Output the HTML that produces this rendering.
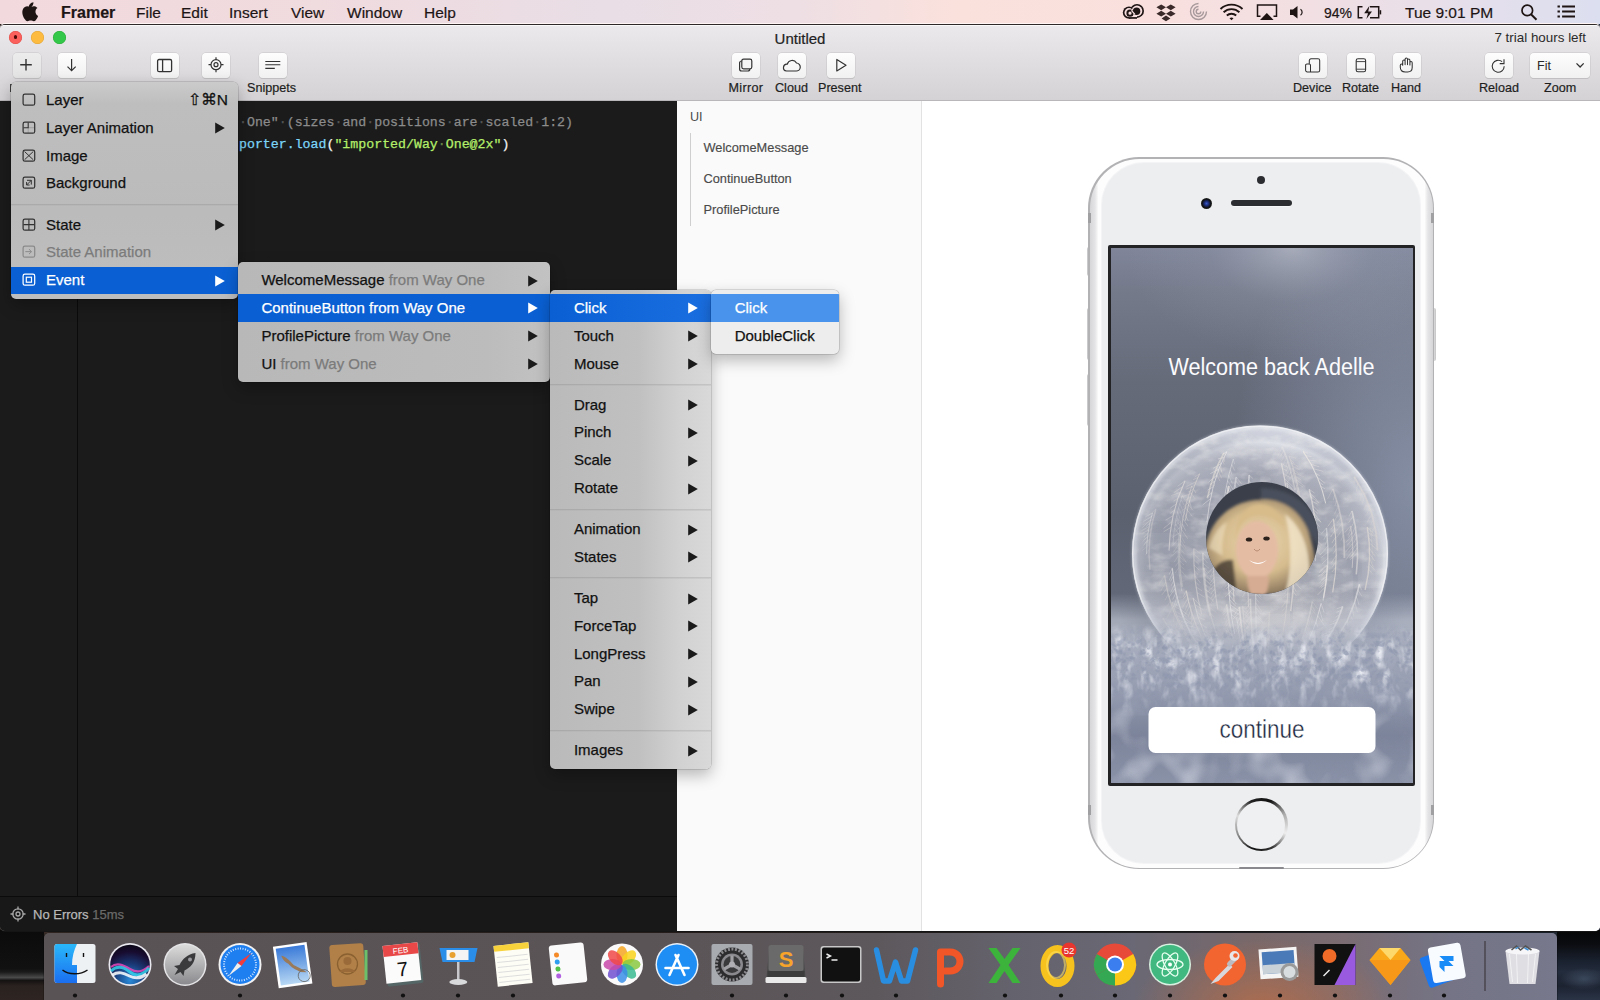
<!DOCTYPE html>
<html><head><meta charset="utf-8">
<style>
*{margin:0;padding:0;box-sizing:border-box}
html,body{width:1600px;height:1000px;overflow:hidden;background:#1e1c1f;font-family:"Liberation Sans",sans-serif}
.abs{position:absolute}
#desk{position:absolute;left:0;top:0;width:1600px;height:1000px;background:linear-gradient(90deg,#2a211e 0%,#3a2d28 3%,#2b2320 50%,#1e2630 97%,#243040 100%)}
#menubar{position:absolute;left:0;top:0;width:1600px;height:24px;background:linear-gradient(90deg,#f2d9dd 0%,#f0dbdf 20%,#e9dee6 38%,#eedfe4 50%,#fbe1dc 60%,#f9e0de 72%,#f1dfe3 82%,#e4dfec 93%,#dcdff0 100%);color:#1d1515;font-size:15.5px}
#menubar span{position:absolute;top:4.6px;-webkit-text-stroke:.2px currentColor;line-height:16px;white-space:nowrap}
#win{position:absolute;left:0;top:23.5px;width:1600px;height:907.5px;border-radius:5px 5px 5px 5px;overflow:hidden;background:#fff;border-top:1.5px solid #2e2829;box-shadow:0 -1px 0 #fff5f5,0 1px 0 #151515}
#toolbar{position:absolute;left:0;top:0;width:1600px;height:76px;background:linear-gradient(#ebe9eb,#d4d2d4);box-shadow:inset 0 1px 0 #fafafa;border-bottom:1px solid #b9b7b9}
.tl{position:absolute;top:6px;width:13px;height:13px;border-radius:50%}
.tb{position:absolute;top:28px;width:28px;height:25px;border-radius:4px;background:linear-gradient(#fdfdfd,#f1f1f1);box-shadow:0 0 0 0.5px #c6c4c6,0 1px 0.5px #bdbbbd}
.ic{position:absolute;left:0;top:0}
.lbl{position:absolute;top:56px;font-size:12.6px;color:#1e1e1e;-webkit-text-stroke:.2px currentColor;white-space:nowrap;line-height:14px}
.mono{position:absolute;font-family:"Liberation Mono",monospace;-webkit-text-stroke:.25px currentColor;font-size:13.25px;line-height:16px;white-space:pre}
.ws{color:#555}
.ws2{color:#6c8a4a}
.ly{position:absolute;left:26.5px;margin-top:-1.5px;-webkit-text-stroke:.15px currentColor;font-size:12.8px;line-height:14px;color:#4a4a4a;white-space:nowrap}
.menu{position:absolute;border-radius:5px;overflow:hidden;-webkit-text-stroke:.25px currentColor;box-shadow:0 0 0 .5px rgba(0,0,0,.22),0 6px 16px rgba(0,0,0,.28);font-size:15px;color:#111}
.row{position:absolute;left:0;right:0;height:27.8px}
.mt{position:absolute;top:-0.5px;line-height:27.8px;white-space:nowrap}
.gr{color:#7b7b7b}
.arr{position:absolute;top:8px}
.mi{position:absolute;left:10.5px;top:6.6px}
.sep{position:absolute;left:0;right:0;height:2px;background:rgba(0,0,0,.09);border-bottom:1px solid rgba(255,255,255,.15)}
#code{position:absolute;left:0;top:76px;width:677px;height:831px;background:#1b1b1b}
#layers{position:absolute;left:677px;top:76px;width:245px;height:831px;background:#fafafa;border-right:1px solid #e2e2e2}
#preview{position:absolute;left:922px;top:76px;width:678px;height:831px;background:#fff}
</style></head><body>
<div id="desk"></div>
<div class="abs" style="left:0;top:930px;width:43.5px;height:70px;background:linear-gradient(#0b0b0b 0,#111 55%,#1a1a1a 60%,#4a4a4a 68%,#151212 72%,#2a221f 80%,#2e2522 100%)"></div>
<div class="abs" style="left:1556.5px;top:930px;width:43.5px;height:70px;background:linear-gradient(#050505 0,#0b0c10 20%,#1a2230 45%,#232c3c 60%,#1c2230 80%,#2a3446 100%)"></div>
<div class="abs" style="left:1560px;top:968px;width:40px;height:22px;background:radial-gradient(ellipse at 60% 50%,rgba(90,110,135,.45),rgba(90,110,135,0) 70%)"></div>
<div id="menubar">
  <svg class="abs" style="left:0;top:0" width="1600" height="24">
    <path d="M35.2 6.4c-.8 0-1.9.6-2.5 1.3-.5.6-1 1.6-.8 2.5.9 0 1.9-.5 2.5-1.2.5-.7.9-1.6.8-2.6zM36.6 12.8c0-1.6 1.3-2.4 1.4-2.4-.8-1.1-2-1.3-2.4-1.3-1-.1-2 .6-2.5.6s-1.3-.6-2.2-.6c-1.1 0-2.2.7-2.8 1.7-1.2 2.1-.3 5.2.9 6.9.6.8 1.2 1.7 2.1 1.7.8 0 1.2-.5 2.2-.5s1.3.5 2.2.5c.9 0 1.5-.9 2-1.7.6-.9.9-1.8.9-1.9 0 0-1.8-.7-1.8-3z" fill="#1e1414" transform="translate(-17.6 -7.0) scale(1.45)"/>
    <g fill="#1e1414"><circle cx="1129" cy="12.6" r="6.2"/><circle cx="1137" cy="10.9" r="7"/><rect x="1129" y="12" width="8" height="6.8"/></g><g fill="#f6dedf"><circle cx="1129" cy="12.6" r="4.5"/><circle cx="1137" cy="10.9" r="5.3"/><rect x="1129" y="12" width="8" height="5.1"/></g><circle cx="1130" cy="13.2" r="2.6" fill="none" stroke="#1e1414" stroke-width="2"/><circle cx="1136.6" cy="11.2" r="3.7" fill="#1e1414"/><path d="M1131.4 10.4l3.5 4" stroke="#f6dedf" stroke-width="1.3"/>
    <path d="M1161.2 4.4l4.8 2.8-4.8 3-4.8-3zM1170.8 4.4l4.8 2.8-4.8 3-4.8-3zM1161.2 10.8l4.8 2.9-4.8 2.9-4.8-2.9zM1170.8 10.8l4.8 2.9-4.8 2.9-4.8-2.9zM1166 15.6l4.4 2.8-4.4 2.8-4.4-2.8z" fill="#3a2a2a"/>
    <g fill="none" stroke="#a89a9c" stroke-width="1.4"><path d="M1206.5 11.5a8 8 0 1 1-8-8"/><path d="M1203.5 11.5a5 5 0 1 1-5-5"/><path d="M1200.8 11.5a2.3 2.3 0 1 1-2.3-2.3"/></g>
    <g fill="none" stroke="#1e1414" stroke-width="1.9"><path d="M1220.5 9a16 16 0 0 1 22 0"/><path d="M1223.6 12.3a11.5 11.5 0 0 1 15.8 0"/><path d="M1226.8 15.5a7 7 0 0 1 9.4 0"/></g>
    <path d="M1229.5 18.3l2 1.9 2-1.9a3 3 0 0 0-4 0z" fill="#1e1414"/>
    <path d="M1260.5 16.3h-3v-11.2h19v11.2h-3" fill="none" stroke="#1e1414" stroke-width="1.5"/><path d="M1260 20l6.8-7 6.8 7z" fill="#1e1414"/>
    <path d="M1290 9.5h3l4.5-3.5v12.4l-4.5-3.5h-3z" fill="#1e1414"/><path d="M1300.5 9.2a3.6 3.6 0 0 1 0 6" stroke="#1e1414" stroke-width="1.2" fill="none"/>
    <path d="M1362.5 6.8h-4.2v11h4.2M1370 6.8h8.7v11h-8.7" fill="none" stroke="#1e1414" stroke-width="1.5"/><path d="M1379.6 10.2h1.6v4.2h-1.6z" fill="#1e1414"/><path d="M1369.5 5.8l-5.3 7.5h3.8l-1.6 5.6 5.6-7.5h-3.8z" fill="#1e1414"/>
    <circle cx="1527.3" cy="10.4" r="5.3" fill="none" stroke="#1e1414" stroke-width="1.7"/><path d="M1531 14.2l5.5 5.5" stroke="#1e1414" stroke-width="2"/>
    <path d="M1557.5 6.5h17.5M1557.5 11.5h17.5M1557.5 16.5h17.5" stroke="#1e1414" stroke-width="2" stroke-dasharray="2.4 2.2 100"/>
  </svg>

  <span style="left:61px;font-weight:bold;font-size:16px">Framer</span>
  <span style="left:136px">File</span>
  <span style="left:181px">Edit</span>
  <span style="left:229px">Insert</span>
  <span style="left:291px">View</span>
  <span style="left:347px">Window</span>
  <span style="left:424px">Help</span>
  <span style="left:1324px;font-size:14px;top:5px">94%</span>
  <span style="left:1405px">Tue 9:01 PM</span>
</div>
<div id="win">
  <div id="toolbar">
    <div class="tl" style="left:9px;background:#fc605c;box-shadow:inset 0 0 0 .5px #de4a45"><div class="abs" style="left:4.6px;top:4.6px;width:3.8px;height:3.8px;border-radius:50%;background:#4a0a08"></div></div>
    <div class="tl" style="left:31px;background:#fdbc40;box-shadow:inset 0 0 0 .5px #dea236"></div>
    <div class="tl" style="left:53px;background:#34c84a;box-shadow:inset 0 0 0 .5px #27aa35"></div>
    <div class="abs" style="left:0;top:6px;width:1600px;text-align:center;font-size:15px;color:#222;line-height:16px;-webkit-text-stroke:.2px #222">Untitled</div>

    <div class="tb" style="left:13px;background:linear-gradient(#ececec,#e3e3e3)"><svg class="ic" width="28" height="25"><path d="M13 6v11.5M7.2 11.8h11.6" stroke="#333" stroke-width="1.4" fill="none"/></svg></div>
    <div class="tb" style="left:58px"><svg class="ic" width="28" height="25"><path d="M13.6 6v11.5M9.5 13.6l4.1 4.1l4.1-4.1" stroke="#333" stroke-width="1.2" fill="none"/></svg></div>
    <div class="tb" style="left:151px"><svg class="ic" width="28" height="25"><rect x="6.6" y="6.5" width="14" height="12.2" rx="1.5" stroke="#333" stroke-width="1.3" fill="none"/><path d="M11.6 6.5v12.2" stroke="#333" stroke-width="1.3"/></svg></div>
    <div class="tb" style="left:202px"><svg class="ic" width="28" height="25"><circle cx="14" cy="11.7" r="5" stroke="#333" stroke-width="1.2" fill="none"/><circle cx="14" cy="11.7" r="2" stroke="#333" stroke-width="1.2" fill="none"/><path d="M14 4.2v2.5M14 16.7v2.5M6.5 11.7h2.5M19 11.7h2.5" stroke="#333" stroke-width="1.2"/></svg></div>
    <div class="tb" style="left:259px"><svg class="ic" width="28" height="25"><path d="M6.3 8.5h15M6.3 11.7h15M6.3 15.4h9.5" stroke="#333" stroke-width="1.1"/></svg></div>
    <div class="lbl" style="left:247px">Snippets</div>
    <div class="abs" style="left:10px;top:59px;width:1.5px;height:8px;background:#444"></div>
    <div class="tb" style="left:732px"><svg class="ic" width="28" height="25"><rect x="7.6" y="8" width="10.2" height="10" rx="2" stroke="#333" stroke-width="1.2" fill="none"/><rect x="9.8" y="6.1" width="10" height="9.8" rx="1.8" stroke="#333" stroke-width="1.2" fill="#f4f4f4"/></svg></div>
    <div class="lbl" style="left:728.5px;letter-spacing:.3px">Mirror</div>
    <div class="tb" style="left:778px"><svg class="ic" width="28" height="25"><path d="M8.5 18h9.5a4 4 0 0 0 0.5-8a5 5 0 0 0-9.2 1.2a3.4 3.4 0 0 0-0.8 6.8z" stroke="#333" stroke-width="1.2" fill="none"/></svg></div>
    <div class="lbl" style="left:775px">Cloud</div>
    <div class="tb" style="left:827px"><svg class="ic" width="28" height="25"><path d="M9.8 6.5v11.4l9.2-5.7z" stroke="#333" stroke-width="1.2" fill="none" stroke-linejoin="round"/></svg></div>
    <div class="lbl" style="left:818px">Present</div>
    <div class="tb" style="left:1299px"><svg class="ic" width="28" height="25"><path d="M10.3 10.6V7.5a1.7 1.7 0 0 1 1.7-1.7h7a1.7 1.7 0 0 1 1.7 1.7v9.7a1.7 1.7 0 0 1-1.7 1.7H8.3a1.7 1.7 0 0 1-1.7-1.7v-5a1.3 1.3 0 0 1 1.3-1.3h2.3a1.3 1.3 0 0 1 1.3 1.3v6.7" stroke="#333" stroke-width="1.05" fill="none"/></svg></div>
    <div class="lbl" style="left:1293px">Device</div>
    <div class="tb" style="left:1347px"><svg class="ic" width="28" height="25"><rect x="9.2" y="5.8" width="9.4" height="13" rx="1.8" stroke="#333" stroke-width="1.1" fill="none"/><path d="M9.3 8.6h9.2M9.3 16.2h9.2" stroke="#333" stroke-width=".9"/></svg></div>
    <div class="lbl" style="left:1342px">Rotate</div>
    <div class="tb" style="left:1393px"><svg class="ic" width="28" height="25"><path d="M7.3 12.2Q7.3 10.9 8.5 10.9Q9.7 10.9 9.7 12.2V8.2Q9.7 6.9 10.9 6.9Q12.1 6.9 12.1 8.2V11.6V6.2Q12.1 4.9 13.3 4.9Q14.5 4.9 14.5 6.2V11.6V7.2Q14.5 5.9 15.7 5.9Q16.9 5.9 16.9 7.2V12V9.7Q16.9 8.5 18 8.5Q19.2 8.5 19.2 9.7V14.5Q19.2 18.9 14.6 18.9H12.2Q7.3 18.9 7.3 14.3Z" stroke="#333" stroke-width="1.05" fill="none" stroke-linejoin="round"/></svg></div>
    <div class="lbl" style="left:1391px">Hand</div>
    <div class="tb" style="left:1485px"><svg class="ic" width="28" height="25"><path d="M17.1 8.7A6 6 0 1 0 19.2 13.3" stroke="#333" stroke-width="1.1" fill="none"/><path d="M19 6.2v4.4h-4.3" stroke="#333" stroke-width="1.1" fill="none"/></svg></div>
    <div class="lbl" style="left:1479px">Reload</div>
    <div class="tb" style="left:1530px;width:60px"><div class="abs" style="left:7px;top:5.8px;font-size:12.5px;color:#2a2a2a;line-height:16px">Fit</div><svg class="ic" width="60" height="25"><path d="M46.5 10.4l3.6 3.6l3.6-3.6" stroke="#333" stroke-width="1.3" fill="none"/></svg></div>
    <div class="lbl" style="left:1544px">Zoom</div>
    <div class="abs" style="right:14px;top:5px;font-size:13.4px;color:#2b2b2b;line-height:16px">7 trial hours left</div>
  </div>
  <div id="code">
    <div class="abs" style="left:77px;top:0;width:1px;height:795px;background:#0b0b0b"></div>
    <div class="mono" style="left:239px;top:14px;color:#8c8c8c"><span class="ws">&#183;</span>One"<span class="ws">&#183;</span>(sizes<span class="ws">&#183;</span>and<span class="ws">&#183;</span>positions<span class="ws">&#183;</span>are<span class="ws">&#183;</span>scaled<span class="ws">&#183;</span>1:2)</div>
    <div class="mono" style="left:239px;top:36px;color:#f2f2f2"><span style="color:#7dd6fa">porter.load</span>(<span style="color:#b4ef6a">"imported/Way<span class="ws2">&#183;</span>One@2x"</span>)</div>
    <div class="abs" style="left:0;top:795px;width:677px;height:1px;background:#0b0b0b"></div>
    <div class="abs" style="left:0;top:796px;width:677px;height:35px;background:#181818"></div>
    <svg class="abs" style="left:9px;top:804px" width="18" height="18"><circle cx="9" cy="9" r="5.2" stroke="#a8a8a8" stroke-width="1.3" fill="none"/><circle cx="9" cy="9" r="2" stroke="#a8a8a8" stroke-width="1.3" fill="none"/><path d="M9 1.5v3M9 13.5v3M1.5 9h3M13.5 9h3" stroke="#a8a8a8" stroke-width="1.3"/></svg>
    <div class="abs" style="left:33px;top:806px;font-size:13px;line-height:15px;color:#b8b8b8;white-space:nowrap;-webkit-text-stroke:.25px currentColor">No Errors <span style="color:#6a6a6a">15ms</span></div>
  </div>
  <div id="layers">
    <div class="abs" style="left:13px;top:9.5px;font-size:12.6px;line-height:14px;color:#4a4a4a">UI</div>
    <div class="abs" style="left:13px;top:32px;width:1px;height:93px;background:#cfcfcf"></div>
    <div class="ly" style="top:42px">WelcomeMessage</div>
    <div class="ly" style="top:73px">ContinueButton</div>
    <div class="ly" style="top:104px">ProfilePicture</div>
  </div>
  <div id="preview"></div>
</div>

<div id="phone" class="abs" style="left:1086px;top:157px;width:350px;height:712px">
  <div class="abs" style="left:0.5px;top:90px;width:4px;height:29px;border-radius:2px 0 0 2px;background:linear-gradient(90deg,#c4c4c6,#f2f2f2)"></div>
  <div class="abs" style="left:0.5px;top:151px;width:4px;height:52px;border-radius:2px 0 0 2px;background:linear-gradient(90deg,#c4c4c6,#f2f2f2)"></div>
  <div class="abs" style="left:0.5px;top:217px;width:4px;height:52px;border-radius:2px 0 0 2px;background:linear-gradient(90deg,#c4c4c6,#f2f2f2)"></div>
  <div class="abs" style="left:345.5px;top:151px;width:4px;height:53px;border-radius:0 2px 2px 0;background:linear-gradient(90deg,#f2f2f2,#c4c4c6)"></div>
  <div class="abs" style="left:2px;top:0;width:346px;height:712px;border-radius:51px;background:#b2b2b5"></div>
  <div class="abs" style="left:3.5px;top:1.5px;width:343px;height:709px;border-radius:49.5px;background:linear-gradient(90deg,#d6d6d9 0,#e4e4e6 5px,#fdfdfd 8.5px,#fdfdfd calc(100% - 8.5px),#e4e4e6 calc(100% - 5px),#d6d6d9 100%)"></div>
  <div class="abs" style="left:2px;top:56px;width:3px;height:10px;background:#a0a0a3"></div>
  <div class="abs" style="left:345px;top:56px;width:3px;height:10px;background:#a0a0a3"></div>
  <div class="abs" style="left:2px;top:648px;width:3px;height:10px;background:#a0a0a3"></div>
  <div class="abs" style="left:345px;top:648px;width:3px;height:10px;background:#a0a0a3"></div>
  <div class="abs" style="left:16px;top:6px;width:318px;height:700px;border-radius:42px;background:#eceef0;box-shadow:0 0 0 1px #f4f4f6"></div>
  <div class="abs" style="left:171px;top:19px;width:8px;height:8px;border-radius:50%;background:#2a2c30"></div>
  <div class="abs" style="left:114.5px;top:40.5px;width:11px;height:11px;border-radius:50%;background:radial-gradient(circle at 50% 50%,#3a58c8 0,#1a2a70 30%,#111 55%,#444 100%)"></div>
  <div class="abs" style="left:145px;top:43px;width:61px;height:6px;border-radius:3px;background:#2c2d30;box-shadow:0 0.5px 0 #fff"></div>
  <div class="abs" style="left:148.5px;top:641px;width:53px;height:53px;border-radius:50%;background:conic-gradient(from 200deg,#111,#888,#ddd,#222,#111,#aaa,#eee,#333,#111)"></div>
  <div class="abs" style="left:151px;top:643.5px;width:48px;height:48px;border-radius:50%;background:#eff0f2"></div>
  <div class="abs" style="left:152.5px;top:709.5px;width:45px;height:2.5px;border-radius:1px;background:#8a8a8e"></div>
  <div id="screen" class="abs" style="left:21.5px;top:88px;width:307px;height:541px;background:#232326;border-radius:2px;overflow:hidden">
    <svg class="abs" style="left:3px;top:3px" width="302" height="535">
      <defs>
        <linearGradient id="bgv" x1="0" y1="0" x2="0" y2="1">
          <stop offset="0" stop-color="#80859a"/><stop offset=".08" stop-color="#747a8a"/><stop offset=".25" stop-color="#666b7a"/><stop offset=".5" stop-color="#5b616f"/><stop offset=".7" stop-color="#646a7a"/><stop offset="1" stop-color="#8a92a8"/>
        </linearGradient>
        <radialGradient id="bgr" cx="1" cy=".45" r=".6">
          <stop offset="0" stop-color="#95a0b8" stop-opacity=".7"/><stop offset="1" stop-color="#95a0b8" stop-opacity="0"/>
        </radialGradient>
        <radialGradient id="bub" cx=".5" cy=".55" r=".5">
          <stop offset="0" stop-color="#b4b4bc"/><stop offset=".5" stop-color="#acaeb8"/><stop offset=".75" stop-color="#b2b4c0"/><stop offset=".9" stop-color="#c6c8d2"/><stop offset=".97" stop-color="#dfe1e8"/><stop offset="1" stop-color="#cfd2dc"/>
        </radialGradient>
        <linearGradient id="bubShade" x1="0" y1="0" x2="1" y2="0">
          <stop offset="0" stop-color="#5a6070" stop-opacity=".25"/><stop offset=".5" stop-color="#fff" stop-opacity="0"/><stop offset="1" stop-color="#5a6070" stop-opacity=".1"/>
        </linearGradient>
        <linearGradient id="snow" x1="0" y1="0" x2="0" y2="1">
          <stop offset="0" stop-color="#b0b6c4" stop-opacity="0"/><stop offset=".14" stop-color="#b8bdca" stop-opacity=".75"/><stop offset=".3" stop-color="#b0b6c4" stop-opacity=".95"/><stop offset=".5" stop-color="#8f97ac"/><stop offset=".75" stop-color="#7c849b"/><stop offset="1" stop-color="#8a92a8"/>
        </linearGradient>
        <filter id="noise" x="0" y="0" width="100%" height="100%">
          <feTurbulence type="fractalNoise" baseFrequency=".09 .05" numOctaves="3" seed="4"/>
          <feColorMatrix type="matrix" values="0 0 0 0 .95  0 0 0 0 .96  0 0 0 0 1  2.6 0 0 0 -1.2"/>
        </filter>
        <filter id="noise2" x="0" y="0" width="100%" height="100%">
          <feTurbulence type="fractalNoise" baseFrequency=".035" numOctaves="3" seed="9"/>
          <feColorMatrix type="matrix" values="0 0 0 0 .25  0 0 0 0 .28  0 0 0 0 .38  1.8 0 0 0 -.9"/>
        </filter>
        <filter id="feath" x="0" y="0" width="100%" height="100%">
          <feTurbulence type="fractalNoise" baseFrequency=".05 .09" numOctaves="3" seed="2"/>
          <feColorMatrix type="matrix" values="0 0 0 0 .98  0 0 0 0 .96  0 0 0 0 .93  2.6 0 0 0 -1.15"/>
        </filter>
        <clipPath id="bclip"><circle cx="149" cy="305.5" r="128"/></clipPath>
        <clipPath id="ppclip"><circle cx="151" cy="290" r="56"/></clipPath>
        <radialGradient id="hair" cx=".5" cy=".45" r=".55">
          <stop offset="0" stop-color="#ead6b0"/><stop offset=".6" stop-color="#d6bc8e"/><stop offset="1" stop-color="#8e7a60"/>
        </radialGradient>
      <linearGradient id="mg1" x1="0" y1="0" x2="0" y2="1"><stop offset="0" stop-color="#fff" stop-opacity="0"/><stop offset=".25" stop-color="#fff" stop-opacity=".9"/><stop offset=".55" stop-color="#fff" stop-opacity=".8"/><stop offset="1" stop-color="#fff" stop-opacity="0"/></linearGradient>
        <mask id="m1"><rect y="375" width="302" height="95" fill="url(#mg1)"/></mask>
        <linearGradient id="mg2" x1="0" y1="0" x2="0" y2="1"><stop offset="0" stop-color="#fff" stop-opacity="0"/><stop offset=".2" stop-color="#fff" stop-opacity=".8"/><stop offset=".5" stop-color="#fff" stop-opacity=".6"/><stop offset="1" stop-color="#fff" stop-opacity=".3"/></linearGradient>
        <mask id="m2"><rect y="380" width="302" height="155" fill="url(#mg2)"/></mask>
      <filter id="noise3" x="0" y="0" width="100%" height="100%">
          <feTurbulence type="turbulence" baseFrequency=".12" numOctaves="2" seed="11"/>
          <feColorMatrix type="matrix" values="0 0 0 0 .26  0 0 0 0 .3  0 0 0 0 .42  3 0 0 0 -.7"/>
        </filter>
        <filter id="blob" x="0" y="0" width="100%" height="100%">
          <feTurbulence type="fractalNoise" baseFrequency=".03" numOctaves="2" seed="21"/>
          <feColorMatrix type="matrix" values="0 0 0 0 .8  0 0 0 0 .82  0 0 0 0 .88  2.4 0 0 0 -1.1"/>
        </filter>
        <linearGradient id="mg3" x1="0" y1="0" x2="0" y2="1"><stop offset="0" stop-color="#fff" stop-opacity="0"/><stop offset=".3" stop-color="#fff" stop-opacity=".8"/><stop offset="1" stop-color="#fff" stop-opacity=".8"/></linearGradient>
        <mask id="m3"><rect y="450" width="302" height="85" fill="url(#mg3)"/></mask>
      <radialGradient id="bgt" cx=".6" cy="0" r=".55"><stop offset="0" stop-color="#b8bcc8" stop-opacity=".7"/><stop offset=".5" stop-color="#9aa0b0" stop-opacity=".2"/><stop offset="1" stop-color="#9aa0b0" stop-opacity="0"/></radialGradient>
      <radialGradient id="msg" cx=".5" cy=".05" r=".6" gradientTransform="scale(1 1)"><stop offset="0" stop-color="#fff" stop-opacity=".25"/><stop offset=".45" stop-color="#fff" stop-opacity=".5"/><stop offset=".8" stop-color="#fff" stop-opacity="1"/><stop offset="1" stop-color="#fff" stop-opacity="1"/></radialGradient>
        <mask id="msnow"><rect y="345" width="302" height="190" fill="url(#msg)"/></mask>
      <linearGradient id="crys" x1="0" y1="0" x2="0" y2="1"><stop offset="0" stop-color="#a4aabb" stop-opacity="0"/><stop offset=".3" stop-color="#a4aabb" stop-opacity=".9"/><stop offset=".7" stop-color="#959cb0" stop-opacity=".95"/><stop offset="1" stop-color="#8a92a8" stop-opacity="0"/></linearGradient>
      <filter id="soft2" x="-50%" y="-50%" width="200%" height="200%"><feGaussianBlur stdDeviation="14"/></filter>
      <filter id="soft3" x="-50%" y="-50%" width="200%" height="200%"><feGaussianBlur stdDeviation="4"/></filter>
      <filter id="pps" x="-10%" y="-10%" width="120%" height="120%"><feGaussianBlur stdDeviation="1.6"/></filter>
      <filter id="soft"><feGaussianBlur stdDeviation="1.5"/></filter>
      </defs>
      <rect width="302" height="535" fill="url(#bgv)"/>
      <rect width="302" height="535" fill="url(#bgr)"/>
      <rect width="302" height="200" fill="url(#bgt)"/>
      <circle cx="149" cy="305.5" r="128" fill="url(#bub)"/>
      <g clip-path="url(#bclip)">
        <ellipse cx="95" cy="300" rx="75" ry="110" fill="#7c8294" opacity=".35" filter="url(#soft2)"/>
        <ellipse cx="215" cy="290" rx="50" ry="90" fill="#848a9c" opacity=".25" filter="url(#soft2)"/>
        <ellipse cx="150" cy="400" rx="120" ry="50" fill="#eae6e4" opacity=".55" filter="url(#soft2)"/>
        <rect x="21" y="177" width="256" height="256" filter="url(#feath)" opacity=".4"/>
        <g><path d="M67.6 318.6L103.6 335.9" stroke="#6c7284" stroke-width="7.4" opacity="0.11" stroke-linecap="round" filter="url(#soft3)"/><path d="M134.4 401.4L121.6 440.0" stroke="#6c7284" stroke-width="12.2" opacity="0.14" stroke-linecap="round" filter="url(#soft3)"/><path d="M186.8 354.4L163.0 361.6" stroke="#6c7284" stroke-width="7.7" opacity="0.16" stroke-linecap="round" filter="url(#soft3)"/><path d="M225.1 344.0L234.0 372.8" stroke="#6c7284" stroke-width="14.8" opacity="0.07" stroke-linecap="round" filter="url(#soft3)"/><path d="M248.2 345.4L282.1 355.3" stroke="#6c7284" stroke-width="16.0" opacity="0.17" stroke-linecap="round" filter="url(#soft3)"/><path d="M194.8 344.6L208.1 364.6" stroke="#6c7284" stroke-width="12.8" opacity="0.09" stroke-linecap="round" filter="url(#soft3)"/><path d="M140.8 282.0L119.8 295.8" stroke="#6c7284" stroke-width="10.8" opacity="0.12" stroke-linecap="round" filter="url(#soft3)"/><path d="M95.2 268.5L126.6 271.5" stroke="#6c7284" stroke-width="13.7" opacity="0.17" stroke-linecap="round" filter="url(#soft3)"/><path d="M231.1 293.2L243.9 321.1" stroke="#6c7284" stroke-width="13.5" opacity="0.14" stroke-linecap="round" filter="url(#soft3)"/><path d="M181.0 333.3L179.8 364.1" stroke="#6c7284" stroke-width="14.6" opacity="0.13" stroke-linecap="round" filter="url(#soft3)"/><path d="M245.6 322.8L243.7 355.6" stroke="#6c7284" stroke-width="9.2" opacity="0.12" stroke-linecap="round" filter="url(#soft3)"/><path d="M77.7 365.8L74.1 388.6" stroke="#6c7284" stroke-width="8.8" opacity="0.15" stroke-linecap="round" filter="url(#soft3)"/><path d="M194.0 316.1L181.4 343.7" stroke="#6c7284" stroke-width="7.7" opacity="0.12" stroke-linecap="round" filter="url(#soft3)"/><path d="M161.0 350.7L127.0 355.2" stroke="#6c7284" stroke-width="11.5" opacity="0.17" stroke-linecap="round" filter="url(#soft3)"/><path d="M202.4 399.2L228.0 416.5" stroke="#6c7284" stroke-width="13.9" opacity="0.17" stroke-linecap="round" filter="url(#soft3)"/><path d="M194.4 307.4L215.0 345.3" stroke="#6c7284" stroke-width="9.4" opacity="0.07" stroke-linecap="round" filter="url(#soft3)"/><path d="M225.3 325.1L175.8 325.3" stroke="#6c7284" stroke-width="11.7" opacity="0.07" stroke-linecap="round" filter="url(#soft3)"/><path d="M107.3 390.6L88.2 431.4" stroke="#6c7284" stroke-width="9.2" opacity="0.13" stroke-linecap="round" filter="url(#soft3)"/><path d="M70.2 316.8L42.7 321.4" stroke="#6c7284" stroke-width="15.3" opacity="0.09" stroke-linecap="round" filter="url(#soft3)"/><path d="M122.6 405.0L94.7 410.0" stroke="#6c7284" stroke-width="11.9" opacity="0.15" stroke-linecap="round" filter="url(#soft3)"/><path d="M137.7 266.8L157.5 287.3" stroke="#6c7284" stroke-width="13.3" opacity="0.14" stroke-linecap="round" filter="url(#soft3)"/><path d="M219.5 382.2L243.2 404.7" stroke="#6c7284" stroke-width="11.2" opacity="0.18" stroke-linecap="round" filter="url(#soft3)"/><path d="M75.2 276.3L28.0 282.0" stroke="#6c7284" stroke-width="14.0" opacity="0.12" stroke-linecap="round" filter="url(#soft3)"/><path d="M59.3 249.8L48.4 292.1" stroke="#6c7284" stroke-width="10.3" opacity="0.11" stroke-linecap="round" filter="url(#soft3)"/><path d="M142.5 232.3L129.9 248.5" stroke="#6c7284" stroke-width="15.3" opacity="0.16" stroke-linecap="round" filter="url(#soft3)"/><path d="M234.2 241.5L205.7 263.7" stroke="#6c7284" stroke-width="10.6" opacity="0.08" stroke-linecap="round" filter="url(#soft3)"/><path d="M119.0 345.1L92.1 384.9" stroke="#6c7284" stroke-width="12.1" opacity="0.14" stroke-linecap="round" filter="url(#soft3)"/><path d="M199.1 355.4L212.5 394.2" stroke="#6c7284" stroke-width="9.4" opacity="0.11" stroke-linecap="round" filter="url(#soft3)"/><path d="M111.0 381.7L134.3 388.5" stroke="#6c7284" stroke-width="10.1" opacity="0.15" stroke-linecap="round" filter="url(#soft3)"/><path d="M154.0 223.0L173.7 266.8" stroke="#6c7284" stroke-width="7.4" opacity="0.13" stroke-linecap="round" filter="url(#soft3)"/><path d="M138.2 227.0L137.1 242.5L136.3 258.0L135.7 273.5L135.4 288.9" stroke="#f8f6f4" stroke-width="1.7" opacity="0.48" fill="none"/><path d="M138.2 227.0l3.6 3.5" stroke="#f8f6f4" stroke-width=".8" opacity="0.34"/><path d="M137.8 232.2l3.8 5.8" stroke="#f8f6f4" stroke-width=".8" opacity="0.34"/><path d="M137.4 237.4l3.9 7.0" stroke="#f8f6f4" stroke-width=".8" opacity="0.34"/><path d="M137.1 242.5l5.8 9.8" stroke="#f8f6f4" stroke-width=".8" opacity="0.34"/><path d="M136.8 247.7l6.0 7.9" stroke="#f8f6f4" stroke-width=".8" opacity="0.34"/><path d="M136.5 252.8l4.1 7.2" stroke="#f8f6f4" stroke-width=".8" opacity="0.34"/><path d="M136.3 258.0l7.1 8.3" stroke="#f8f6f4" stroke-width=".8" opacity="0.34"/><path d="M136.1 263.1l4.4 6.9" stroke="#f8f6f4" stroke-width=".8" opacity="0.34"/><path d="M135.9 268.3l7.8 7.5" stroke="#f8f6f4" stroke-width=".8" opacity="0.34"/><path d="M82.8 300.5L83.0 317.0L84.3 333.5L86.9 350.1L90.8 366.6" stroke="#e6e0dc" stroke-width="1.2" opacity="0.51" fill="none"/><path d="M82.8 300.5l7.0 5.5" stroke="#e6e0dc" stroke-width=".8" opacity="0.36"/><path d="M82.9 306.0l5.3 5.3" stroke="#e6e0dc" stroke-width=".8" opacity="0.36"/><path d="M82.9 311.5l5.2 5.0" stroke="#e6e0dc" stroke-width=".8" opacity="0.36"/><path d="M83.0 317.0l5.3 5.3" stroke="#e6e0dc" stroke-width=".8" opacity="0.36"/><path d="M83.4 322.5l3.9 4.5" stroke="#e6e0dc" stroke-width=".8" opacity="0.36"/><path d="M83.9 328.0l5.5 6.9" stroke="#e6e0dc" stroke-width=".8" opacity="0.36"/><path d="M84.3 333.5l3.6 3.9" stroke="#e6e0dc" stroke-width=".8" opacity="0.36"/><path d="M85.2 339.0l5.8 3.9" stroke="#e6e0dc" stroke-width=".8" opacity="0.36"/><path d="M86.0 344.6l7.9 4.8" stroke="#e6e0dc" stroke-width=".8" opacity="0.36"/><path d="M125.6 369.1L128.2 387.2L132.1 405.2L138.4 423.3L143.6 430.9" stroke="#f8f6f4" stroke-width="1.1" opacity="0.36" fill="none"/><path d="M125.6 369.1l7.7 5.1" stroke="#f8f6f4" stroke-width=".8" opacity="0.25"/><path d="M126.5 375.1l6.5 4.5" stroke="#f8f6f4" stroke-width=".8" opacity="0.25"/><path d="M127.3 381.1l5.3 4.3" stroke="#f8f6f4" stroke-width=".8" opacity="0.25"/><path d="M128.2 387.2l5.9 4.9" stroke="#f8f6f4" stroke-width=".8" opacity="0.25"/><path d="M129.5 393.2l5.9 5.1" stroke="#f8f6f4" stroke-width=".8" opacity="0.25"/><path d="M130.8 399.2l5.3 3.2" stroke="#f8f6f4" stroke-width=".8" opacity="0.25"/><path d="M132.1 405.2l5.4 4.1" stroke="#f8f6f4" stroke-width=".8" opacity="0.25"/><path d="M134.2 411.2l8.2 2.9" stroke="#f8f6f4" stroke-width=".8" opacity="0.25"/><path d="M136.3 417.2l8.2 7.1" stroke="#f8f6f4" stroke-width=".8" opacity="0.25"/><path d="M231.7 358.5L227.3 370.5L221.6 382.5L214.3 394.5L204.8 406.5" stroke="#f8f6f4" stroke-width="1.7" opacity="0.61" fill="none"/><path d="M231.7 358.5l-6.0 2.4" stroke="#f8f6f4" stroke-width=".8" opacity="0.43"/><path d="M230.2 362.5l-4.8 1.8" stroke="#f8f6f4" stroke-width=".8" opacity="0.43"/><path d="M228.7 366.5l-4.2 2.8" stroke="#f8f6f4" stroke-width=".8" opacity="0.43"/><path d="M227.3 370.5l-5.2 3.3" stroke="#f8f6f4" stroke-width=".8" opacity="0.43"/><path d="M225.4 374.5l-6.7 2.4" stroke="#f8f6f4" stroke-width=".8" opacity="0.43"/><path d="M223.5 378.5l-5.4 3.3" stroke="#f8f6f4" stroke-width=".8" opacity="0.43"/><path d="M221.6 382.5l-10.2 4.3" stroke="#f8f6f4" stroke-width=".8" opacity="0.43"/><path d="M219.1 386.5l-5.5 1.6" stroke="#f8f6f4" stroke-width=".8" opacity="0.43"/><path d="M216.7 390.5l-8.5 2.2" stroke="#f8f6f4" stroke-width=".8" opacity="0.43"/><path d="M136.5 298.3L136.5 313.6L136.7 328.9L137.1 344.2L137.6 359.5" stroke="#e6e0dc" stroke-width="1.4" opacity="0.50" fill="none"/><path d="M136.5 298.3l-6.5 8.7" stroke="#e6e0dc" stroke-width=".8" opacity="0.35"/><path d="M136.5 303.4l-8.4 7.5" stroke="#e6e0dc" stroke-width=".8" opacity="0.35"/><path d="M136.5 308.5l-5.3 9.5" stroke="#e6e0dc" stroke-width=".8" opacity="0.35"/><path d="M136.5 313.6l-2.9 5.4" stroke="#e6e0dc" stroke-width=".8" opacity="0.35"/><path d="M136.6 318.7l-5.4 5.3" stroke="#e6e0dc" stroke-width=".8" opacity="0.35"/><path d="M136.6 323.8l-5.5 9.4" stroke="#e6e0dc" stroke-width=".8" opacity="0.35"/><path d="M136.7 328.9l-6.3 6.2" stroke="#e6e0dc" stroke-width=".8" opacity="0.35"/><path d="M136.8 334.0l-5.8 5.0" stroke="#e6e0dc" stroke-width=".8" opacity="0.35"/><path d="M136.9 339.1l-5.5 10.0" stroke="#e6e0dc" stroke-width=".8" opacity="0.35"/><path d="M117.7 237.8L115.7 250.5L114.2 263.2L113.1 276.0L112.5 288.7" stroke="#f4eee8" stroke-width="1.7" opacity="0.63" fill="none"/><path d="M117.7 237.8l3.7 9.1" stroke="#f4eee8" stroke-width=".8" opacity="0.44"/><path d="M117.1 242.0l6.5 9.8" stroke="#f4eee8" stroke-width=".8" opacity="0.44"/><path d="M116.4 246.2l6.8 7.6" stroke="#f4eee8" stroke-width=".8" opacity="0.44"/><path d="M115.7 250.5l3.6 3.8" stroke="#f4eee8" stroke-width=".8" opacity="0.44"/><path d="M115.2 254.7l5.2 10.2" stroke="#f4eee8" stroke-width=".8" opacity="0.44"/><path d="M114.7 259.0l3.5 5.4" stroke="#f4eee8" stroke-width=".8" opacity="0.44"/><path d="M114.2 263.2l5.2 6.0" stroke="#f4eee8" stroke-width=".8" opacity="0.44"/><path d="M113.8 267.5l4.3 5.8" stroke="#f4eee8" stroke-width=".8" opacity="0.44"/><path d="M113.5 271.7l2.8 4.9" stroke="#f4eee8" stroke-width=".8" opacity="0.44"/><path d="M169.3 385.4L165.5 404.5L159.1 423.5L154.2 430.9L154.2 430.9" stroke="#f8f6f4" stroke-width="0.9" opacity="0.36" fill="none"/><path d="M169.3 385.4l-7.8 5.7" stroke="#f8f6f4" stroke-width=".8" opacity="0.25"/><path d="M168.0 391.8l-4.3 5.0" stroke="#f8f6f4" stroke-width=".8" opacity="0.25"/><path d="M166.8 398.1l-7.9 6.4" stroke="#f8f6f4" stroke-width=".8" opacity="0.25"/><path d="M165.5 404.5l-9.4 4.2" stroke="#f8f6f4" stroke-width=".8" opacity="0.25"/><path d="M163.3 410.8l-6.3 4.4" stroke="#f8f6f4" stroke-width=".8" opacity="0.25"/><path d="M161.2 417.2l-11.0 4.7" stroke="#f8f6f4" stroke-width=".8" opacity="0.25"/><path d="M159.1 423.5l-6.1 1.8" stroke="#f8f6f4" stroke-width=".8" opacity="0.25"/><path d="M157.4 426.0l-8.5 2.1" stroke="#f8f6f4" stroke-width=".8" opacity="0.25"/><path d="M155.8 428.5l-6.2 2.2" stroke="#f8f6f4" stroke-width=".8" opacity="0.25"/><path d="M121.2 315.7L121.4 325.1L121.8 334.6L122.4 344.0L123.1 353.4" stroke="#e6e0dc" stroke-width="1.1" opacity="0.60" fill="none"/><path d="M121.2 315.7l-4.5 3.8" stroke="#e6e0dc" stroke-width=".8" opacity="0.42"/><path d="M121.3 318.9l-5.5 6.4" stroke="#e6e0dc" stroke-width=".8" opacity="0.42"/><path d="M121.4 322.0l-3.5 5.0" stroke="#e6e0dc" stroke-width=".8" opacity="0.42"/><path d="M121.4 325.1l-4.5 5.3" stroke="#e6e0dc" stroke-width=".8" opacity="0.42"/><path d="M121.6 328.3l-4.3 6.3" stroke="#e6e0dc" stroke-width=".8" opacity="0.42"/><path d="M121.7 331.4l-8.3 7.8" stroke="#e6e0dc" stroke-width=".8" opacity="0.42"/><path d="M121.8 334.6l-6.7 6.3" stroke="#e6e0dc" stroke-width=".8" opacity="0.42"/><path d="M122.0 337.7l-4.2 8.4" stroke="#e6e0dc" stroke-width=".8" opacity="0.42"/><path d="M122.2 340.8l-8.3 8.1" stroke="#e6e0dc" stroke-width=".8" opacity="0.42"/><path d="M178.2 316.5L177.6 334.1L176.3 351.7L174.4 369.3L171.6 386.9" stroke="#ece4dc" stroke-width="1.1" opacity="0.42" fill="none"/><path d="M178.2 316.5l-3.8 6.2" stroke="#ece4dc" stroke-width=".8" opacity="0.29"/><path d="M178.0 322.3l-7.4 7.9" stroke="#ece4dc" stroke-width=".8" opacity="0.29"/><path d="M177.8 328.2l-7.5 8.1" stroke="#ece4dc" stroke-width=".8" opacity="0.29"/><path d="M177.6 334.1l-5.0 6.8" stroke="#ece4dc" stroke-width=".8" opacity="0.29"/><path d="M177.2 339.9l-4.1 5.9" stroke="#ece4dc" stroke-width=".8" opacity="0.29"/><path d="M176.8 345.8l-5.1 4.2" stroke="#ece4dc" stroke-width=".8" opacity="0.29"/><path d="M176.3 351.7l-5.8 7.9" stroke="#ece4dc" stroke-width=".8" opacity="0.29"/><path d="M175.7 357.6l-4.4 5.4" stroke="#ece4dc" stroke-width=".8" opacity="0.29"/><path d="M175.1 363.4l-4.0 5.1" stroke="#ece4dc" stroke-width=".8" opacity="0.29"/><path d="M75.2 342.6L77.7 354.0L80.9 365.5L85.1 377.0L90.3 388.5" stroke="#ece4dc" stroke-width="1.2" opacity="0.67" fill="none"/><path d="M75.2 342.6l-3.0 6.2" stroke="#ece4dc" stroke-width=".8" opacity="0.47"/><path d="M76.0 346.4l-3.9 5.1" stroke="#ece4dc" stroke-width=".8" opacity="0.47"/><path d="M76.9 350.2l-5.3 9.1" stroke="#ece4dc" stroke-width=".8" opacity="0.47"/><path d="M77.7 354.0l-3.9 8.8" stroke="#ece4dc" stroke-width=".8" opacity="0.47"/><path d="M78.8 357.9l-5.4 9.5" stroke="#ece4dc" stroke-width=".8" opacity="0.47"/><path d="M79.8 361.7l-2.7 7.3" stroke="#ece4dc" stroke-width=".8" opacity="0.47"/><path d="M80.9 365.5l-1.1 5.4" stroke="#ece4dc" stroke-width=".8" opacity="0.47"/><path d="M82.3 369.3l-2.9 6.4" stroke="#ece4dc" stroke-width=".8" opacity="0.47"/><path d="M83.7 373.2l-2.9 6.4" stroke="#ece4dc" stroke-width=".8" opacity="0.47"/><path d="M144.4 331.6L144.6 345.4L144.8 359.3L145.0 373.1L145.4 386.9" stroke="#f8f6f4" stroke-width="1.2" opacity="0.37" fill="none"/><path d="M144.4 331.6l4.4 6.9" stroke="#f8f6f4" stroke-width=".8" opacity="0.26"/><path d="M144.5 336.2l4.4 5.0" stroke="#f8f6f4" stroke-width=".8" opacity="0.26"/><path d="M144.5 340.8l5.9 8.7" stroke="#f8f6f4" stroke-width=".8" opacity="0.26"/><path d="M144.6 345.4l5.8 6.4" stroke="#f8f6f4" stroke-width=".8" opacity="0.26"/><path d="M144.6 350.0l3.4 4.5" stroke="#f8f6f4" stroke-width=".8" opacity="0.26"/><path d="M144.7 354.7l6.1 9.0" stroke="#f8f6f4" stroke-width=".8" opacity="0.26"/><path d="M144.8 359.3l5.4 6.8" stroke="#f8f6f4" stroke-width=".8" opacity="0.26"/><path d="M144.8 363.9l6.8 9.5" stroke="#f8f6f4" stroke-width=".8" opacity="0.26"/><path d="M144.9 368.5l7.9 6.9" stroke="#f8f6f4" stroke-width=".8" opacity="0.26"/><path d="M74.1 232.8L66.9 250.2L62.1 267.7L59.2 285.1L58.0 302.6" stroke="#f4eee8" stroke-width="1.1" opacity="0.62" fill="none"/><path d="M74.1 232.8l-7.5 5.5" stroke="#f4eee8" stroke-width=".8" opacity="0.43"/><path d="M71.7 238.6l-8.9 6.2" stroke="#f4eee8" stroke-width=".8" opacity="0.43"/><path d="M69.3 244.4l-9.0 3.2" stroke="#f4eee8" stroke-width=".8" opacity="0.43"/><path d="M66.9 250.2l-4.2 3.0" stroke="#f4eee8" stroke-width=".8" opacity="0.43"/><path d="M65.3 256.0l-6.2 4.3" stroke="#f4eee8" stroke-width=".8" opacity="0.43"/><path d="M63.7 261.9l-4.4 3.3" stroke="#f4eee8" stroke-width=".8" opacity="0.43"/><path d="M62.1 267.7l-7.4 4.4" stroke="#f4eee8" stroke-width=".8" opacity="0.43"/><path d="M61.1 273.5l-8.5 6.9" stroke="#f4eee8" stroke-width=".8" opacity="0.43"/><path d="M60.1 279.3l-7.6 4.6" stroke="#f4eee8" stroke-width=".8" opacity="0.43"/><path d="M158.5 363.8L157.9 376.0L157.2 388.1L156.2 400.3L154.9 412.5" stroke="#ece4dc" stroke-width="1.6" opacity="0.31" fill="none"/><path d="M158.5 363.8l-5.3 3.8" stroke="#ece4dc" stroke-width=".8" opacity="0.22"/><path d="M158.3 367.8l-6.9 8.0" stroke="#ece4dc" stroke-width=".8" opacity="0.22"/><path d="M158.1 371.9l-6.5 5.7" stroke="#ece4dc" stroke-width=".8" opacity="0.22"/><path d="M157.9 376.0l-7.5 6.3" stroke="#ece4dc" stroke-width=".8" opacity="0.22"/><path d="M157.7 380.0l-7.5 5.9" stroke="#ece4dc" stroke-width=".8" opacity="0.22"/><path d="M157.4 384.1l-4.6 5.3" stroke="#ece4dc" stroke-width=".8" opacity="0.22"/><path d="M157.2 388.1l-3.4 4.8" stroke="#ece4dc" stroke-width=".8" opacity="0.22"/><path d="M156.8 392.2l-6.7 9.8" stroke="#ece4dc" stroke-width=".8" opacity="0.22"/><path d="M156.5 396.2l-5.5 7.4" stroke="#ece4dc" stroke-width=".8" opacity="0.22"/><path d="M81.1 388.2L90.7 402.1L104.2 416.1L128.6 430.1L131.3 430.9" stroke="#ece4dc" stroke-width="1.7" opacity="0.52" fill="none"/><path d="M81.1 388.2l-1.9 6.3" stroke="#ece4dc" stroke-width=".8" opacity="0.36"/><path d="M84.3 392.8l-0.6 9.6" stroke="#ece4dc" stroke-width=".8" opacity="0.36"/><path d="M87.5 397.5l-0.1 9.0" stroke="#ece4dc" stroke-width=".8" opacity="0.36"/><path d="M90.7 402.1l-0.1 10.3" stroke="#ece4dc" stroke-width=".8" opacity="0.36"/><path d="M95.2 406.8l-0.6 10.2" stroke="#ece4dc" stroke-width=".8" opacity="0.36"/><path d="M99.7 411.5l1.6 10.2" stroke="#ece4dc" stroke-width=".8" opacity="0.36"/><path d="M104.2 416.1l2.3 5.8" stroke="#ece4dc" stroke-width=".8" opacity="0.36"/><path d="M112.3 420.8l4.8 8.0" stroke="#ece4dc" stroke-width=".8" opacity="0.36"/><path d="M120.4 425.4l2.2 5.2" stroke="#ece4dc" stroke-width=".8" opacity="0.36"/><path d="M146.7 275.3L146.6 286.9L146.6 298.6L146.6 310.2L146.6 321.8" stroke="#f8f6f4" stroke-width="1.3" opacity="0.52" fill="none"/><path d="M146.7 275.3l6.4 9.1" stroke="#f8f6f4" stroke-width=".8" opacity="0.36"/><path d="M146.6 279.2l6.7 9.4" stroke="#f8f6f4" stroke-width=".8" opacity="0.36"/><path d="M146.6 283.0l3.6 6.3" stroke="#f8f6f4" stroke-width=".8" opacity="0.36"/><path d="M146.6 286.9l7.4 6.2" stroke="#f8f6f4" stroke-width=".8" opacity="0.36"/><path d="M146.6 290.8l4.5 4.6" stroke="#f8f6f4" stroke-width=".8" opacity="0.36"/><path d="M146.6 294.7l6.1 10.0" stroke="#f8f6f4" stroke-width=".8" opacity="0.36"/><path d="M146.6 298.6l3.1 5.4" stroke="#f8f6f4" stroke-width=".8" opacity="0.36"/><path d="M146.6 302.4l6.7 8.4" stroke="#f8f6f4" stroke-width=".8" opacity="0.36"/><path d="M146.6 306.3l8.4 8.6" stroke="#f8f6f4" stroke-width=".8" opacity="0.36"/><path d="M215.5 279.9L216.8 298.1L216.7 316.3L215.2 334.5L212.1 352.7" stroke="#f8f6f4" stroke-width="1.4" opacity="0.43" fill="none"/><path d="M215.5 279.9l-5.4 6.4" stroke="#f8f6f4" stroke-width=".8" opacity="0.30"/><path d="M216.0 285.9l-3.2 5.7" stroke="#f8f6f4" stroke-width=".8" opacity="0.30"/><path d="M216.4 292.0l-2.5 5.1" stroke="#f8f6f4" stroke-width=".8" opacity="0.30"/><path d="M216.8 298.1l-7.3 8.6" stroke="#f8f6f4" stroke-width=".8" opacity="0.30"/><path d="M216.8 304.1l-6.6 5.5" stroke="#f8f6f4" stroke-width=".8" opacity="0.30"/><path d="M216.7 310.2l-5.8 5.9" stroke="#f8f6f4" stroke-width=".8" opacity="0.30"/><path d="M216.7 316.3l-7.8 6.2" stroke="#f8f6f4" stroke-width=".8" opacity="0.30"/><path d="M216.2 322.3l-9.1 6.1" stroke="#f8f6f4" stroke-width=".8" opacity="0.30"/><path d="M215.7 328.4l-6.9 6.0" stroke="#f8f6f4" stroke-width=".8" opacity="0.30"/><path d="M69.3 286.9L68.5 299.9L68.6 312.9L69.5 325.9L71.2 338.9" stroke="#ece4dc" stroke-width="1.5" opacity="0.35" fill="none"/><path d="M69.3 286.9l4.6 8.2" stroke="#ece4dc" stroke-width=".8" opacity="0.24"/><path d="M69.0 291.2l6.4 10.0" stroke="#ece4dc" stroke-width=".8" opacity="0.24"/><path d="M68.8 295.6l5.6 6.5" stroke="#ece4dc" stroke-width=".8" opacity="0.24"/><path d="M68.5 299.9l4.9 6.0" stroke="#ece4dc" stroke-width=".8" opacity="0.24"/><path d="M68.5 304.2l6.5 9.8" stroke="#ece4dc" stroke-width=".8" opacity="0.24"/><path d="M68.5 308.6l7.3 6.2" stroke="#ece4dc" stroke-width=".8" opacity="0.24"/><path d="M68.6 312.9l4.4 4.1" stroke="#ece4dc" stroke-width=".8" opacity="0.24"/><path d="M68.9 317.2l4.4 4.4" stroke="#ece4dc" stroke-width=".8" opacity="0.24"/><path d="M69.2 321.6l5.9 7.0" stroke="#ece4dc" stroke-width=".8" opacity="0.24"/><path d="M80.8 238.0L75.5 254.2L71.9 270.4L69.7 286.6L68.8 302.8" stroke="#e6e0dc" stroke-width="0.9" opacity="0.60" fill="none"/><path d="M80.8 238.0l4.1 7.1" stroke="#e6e0dc" stroke-width=".8" opacity="0.42"/><path d="M79.1 243.4l4.9 7.5" stroke="#e6e0dc" stroke-width=".8" opacity="0.42"/><path d="M77.3 248.8l3.1 11.1" stroke="#e6e0dc" stroke-width=".8" opacity="0.42"/><path d="M75.5 254.2l6.5 8.3" stroke="#e6e0dc" stroke-width=".8" opacity="0.42"/><path d="M74.3 259.6l7.0 8.8" stroke="#e6e0dc" stroke-width=".8" opacity="0.42"/><path d="M73.1 265.0l4.3 8.1" stroke="#e6e0dc" stroke-width=".8" opacity="0.42"/><path d="M71.9 270.4l5.1 7.9" stroke="#e6e0dc" stroke-width=".8" opacity="0.42"/><path d="M71.1 275.8l3.5 6.9" stroke="#e6e0dc" stroke-width=".8" opacity="0.42"/><path d="M70.4 281.2l6.3 9.5" stroke="#e6e0dc" stroke-width=".8" opacity="0.42"/><path d="M159.9 307.9L159.9 316.2L159.8 324.6L159.7 332.9L159.5 341.2" stroke="#f4eee8" stroke-width="1.3" opacity="0.48" fill="none"/><path d="M159.9 307.9l7.1 7.6" stroke="#f4eee8" stroke-width=".8" opacity="0.34"/><path d="M159.9 310.7l6.4 7.3" stroke="#f4eee8" stroke-width=".8" opacity="0.34"/><path d="M159.9 313.5l3.6 3.7" stroke="#f4eee8" stroke-width=".8" opacity="0.34"/><path d="M159.9 316.2l4.5 7.5" stroke="#f4eee8" stroke-width=".8" opacity="0.34"/><path d="M159.9 319.0l5.4 7.1" stroke="#f4eee8" stroke-width=".8" opacity="0.34"/><path d="M159.8 321.8l4.8 8.3" stroke="#f4eee8" stroke-width=".8" opacity="0.34"/><path d="M159.8 324.6l7.6 7.8" stroke="#f4eee8" stroke-width=".8" opacity="0.34"/><path d="M159.8 327.3l6.2 5.9" stroke="#f4eee8" stroke-width=".8" opacity="0.34"/><path d="M159.7 330.1l3.9 3.8" stroke="#f4eee8" stroke-width=".8" opacity="0.34"/><path d="M69.8 273.2L67.7 290.6L67.2 308.0L68.1 325.4L70.7 342.9" stroke="#f4eee8" stroke-width="0.9" opacity="0.36" fill="none"/><path d="M69.8 273.2l-6.1 4.6" stroke="#f4eee8" stroke-width=".8" opacity="0.25"/><path d="M69.1 279.0l-5.1 5.5" stroke="#f4eee8" stroke-width=".8" opacity="0.25"/><path d="M68.4 284.8l-7.6 5.0" stroke="#f4eee8" stroke-width=".8" opacity="0.25"/><path d="M67.7 290.6l-6.9 8.0" stroke="#f4eee8" stroke-width=".8" opacity="0.25"/><path d="M67.5 296.4l-5.3 8.3" stroke="#f4eee8" stroke-width=".8" opacity="0.25"/><path d="M67.3 302.2l-7.9 6.8" stroke="#f4eee8" stroke-width=".8" opacity="0.25"/><path d="M67.2 308.0l-3.9 5.8" stroke="#f4eee8" stroke-width=".8" opacity="0.25"/><path d="M67.5 313.8l-3.2 4.8" stroke="#f4eee8" stroke-width=".8" opacity="0.25"/><path d="M67.8 319.6l-3.6 5.5" stroke="#f4eee8" stroke-width=".8" opacity="0.25"/><path d="M115.1 382.4L120.1 399.1L127.5 415.8L140.6 430.9L140.6 430.9" stroke="#e6e0dc" stroke-width="0.8" opacity="0.49" fill="none"/><path d="M115.1 382.4l5.0 3.6" stroke="#e6e0dc" stroke-width=".8" opacity="0.34"/><path d="M116.8 387.9l7.0 4.8" stroke="#e6e0dc" stroke-width=".8" opacity="0.34"/><path d="M118.4 393.5l9.3 5.9" stroke="#e6e0dc" stroke-width=".8" opacity="0.34"/><path d="M120.1 399.1l10.6 3.6" stroke="#e6e0dc" stroke-width=".8" opacity="0.34"/><path d="M122.6 404.6l7.2 2.6" stroke="#e6e0dc" stroke-width=".8" opacity="0.34"/><path d="M125.0 410.2l9.1 6.6" stroke="#e6e0dc" stroke-width=".8" opacity="0.34"/><path d="M127.5 415.8l9.3 -0.3" stroke="#e6e0dc" stroke-width=".8" opacity="0.34"/><path d="M131.9 420.8l11.4 3.4" stroke="#e6e0dc" stroke-width=".8" opacity="0.34"/><path d="M136.2 425.9l8.1 0.2" stroke="#e6e0dc" stroke-width=".8" opacity="0.34"/><path d="M158.5 387.4L157.6 398.1L156.3 408.7L154.7 419.4L151.9 430.0" stroke="#f4eee8" stroke-width="1.1" opacity="0.65" fill="none"/><path d="M158.5 387.4l-7.5 7.1" stroke="#f4eee8" stroke-width=".8" opacity="0.45"/><path d="M158.2 391.0l-9.5 6.4" stroke="#f4eee8" stroke-width=".8" opacity="0.45"/><path d="M157.9 394.5l-6.2 4.8" stroke="#f4eee8" stroke-width=".8" opacity="0.45"/><path d="M157.6 398.1l-4.4 5.8" stroke="#f4eee8" stroke-width=".8" opacity="0.45"/><path d="M157.2 401.6l-5.0 5.2" stroke="#f4eee8" stroke-width=".8" opacity="0.45"/><path d="M156.7 405.2l-3.7 4.1" stroke="#f4eee8" stroke-width=".8" opacity="0.45"/><path d="M156.3 408.7l-3.7 3.6" stroke="#f4eee8" stroke-width=".8" opacity="0.45"/><path d="M155.8 412.3l-4.7 4.7" stroke="#f4eee8" stroke-width=".8" opacity="0.45"/><path d="M155.2 415.8l-5.3 5.9" stroke="#f4eee8" stroke-width=".8" opacity="0.45"/><path d="M82.1 350.2L87.1 369.3L94.6 388.3L105.7 407.3L125.3 426.3" stroke="#f4eee8" stroke-width="1.0" opacity="0.60" fill="none"/><path d="M82.1 350.2l7.4 7.5" stroke="#f4eee8" stroke-width=".8" opacity="0.42"/><path d="M83.8 356.6l8.5 5.2" stroke="#f4eee8" stroke-width=".8" opacity="0.42"/><path d="M85.5 362.9l5.3 5.5" stroke="#f4eee8" stroke-width=".8" opacity="0.42"/><path d="M87.1 369.3l7.1 2.6" stroke="#f4eee8" stroke-width=".8" opacity="0.42"/><path d="M89.6 375.6l6.5 4.7" stroke="#f4eee8" stroke-width=".8" opacity="0.42"/><path d="M92.1 381.9l8.7 6.6" stroke="#f4eee8" stroke-width=".8" opacity="0.42"/><path d="M94.6 388.3l8.8 1.5" stroke="#f4eee8" stroke-width=".8" opacity="0.42"/><path d="M98.3 394.6l6.2 1.3" stroke="#f4eee8" stroke-width=".8" opacity="0.42"/><path d="M102.0 400.9l9.6 2.9" stroke="#f4eee8" stroke-width=".8" opacity="0.42"/><path d="M122.3 211.0L117.7 227.3L114.4 243.5L112.1 259.8L110.5 276.1" stroke="#f8f6f4" stroke-width="0.9" opacity="0.48" fill="none"/><path d="M122.3 211.0l1.3 5.3" stroke="#f8f6f4" stroke-width=".8" opacity="0.33"/><path d="M120.8 216.4l2.8 6.1" stroke="#f8f6f4" stroke-width=".8" opacity="0.33"/><path d="M119.2 221.8l1.7 4.8" stroke="#f8f6f4" stroke-width=".8" opacity="0.33"/><path d="M117.7 227.3l3.6 8.0" stroke="#f8f6f4" stroke-width=".8" opacity="0.33"/><path d="M116.6 232.7l5.8 9.4" stroke="#f8f6f4" stroke-width=".8" opacity="0.33"/><path d="M115.5 238.1l2.5 5.3" stroke="#f8f6f4" stroke-width=".8" opacity="0.33"/><path d="M114.4 243.5l5.7 9.3" stroke="#f8f6f4" stroke-width=".8" opacity="0.33"/><path d="M113.6 248.9l4.3 10.3" stroke="#f8f6f4" stroke-width=".8" opacity="0.33"/><path d="M112.8 254.4l4.9 8.1" stroke="#f8f6f4" stroke-width=".8" opacity="0.33"/><path d="M131.7 358.3L132.6 369.7L133.7 381.2L135.1 392.7L136.9 404.1" stroke="#e6e0dc" stroke-width="1.2" opacity="0.50" fill="none"/><path d="M131.7 358.3l5.6 5.5" stroke="#e6e0dc" stroke-width=".8" opacity="0.35"/><path d="M132.0 362.1l6.7 6.2" stroke="#e6e0dc" stroke-width=".8" opacity="0.35"/><path d="M132.3 365.9l8.5 6.0" stroke="#e6e0dc" stroke-width=".8" opacity="0.35"/><path d="M132.6 369.7l6.7 7.5" stroke="#e6e0dc" stroke-width=".8" opacity="0.35"/><path d="M133.0 373.6l5.3 6.5" stroke="#e6e0dc" stroke-width=".8" opacity="0.35"/><path d="M133.4 377.4l7.3 7.0" stroke="#e6e0dc" stroke-width=".8" opacity="0.35"/><path d="M133.7 381.2l3.7 4.8" stroke="#e6e0dc" stroke-width=".8" opacity="0.35"/><path d="M134.2 385.0l6.0 7.2" stroke="#e6e0dc" stroke-width=".8" opacity="0.35"/><path d="M134.7 388.9l5.7 6.9" stroke="#e6e0dc" stroke-width=".8" opacity="0.35"/><path d="M239.6 277.9L241.0 288.4L241.7 298.9L241.8 309.4L241.2 319.9" stroke="#e6e0dc" stroke-width="1.0" opacity="0.57" fill="none"/><path d="M239.6 277.9l-5.9 6.6" stroke="#e6e0dc" stroke-width=".8" opacity="0.40"/><path d="M240.1 281.4l-3.0 5.4" stroke="#e6e0dc" stroke-width=".8" opacity="0.40"/><path d="M240.5 284.9l-3.2 5.3" stroke="#e6e0dc" stroke-width=".8" opacity="0.40"/><path d="M241.0 288.4l-6.4 6.1" stroke="#e6e0dc" stroke-width=".8" opacity="0.40"/><path d="M241.2 291.9l-4.7 4.8" stroke="#e6e0dc" stroke-width=".8" opacity="0.40"/><path d="M241.5 295.4l-7.3 9.1" stroke="#e6e0dc" stroke-width=".8" opacity="0.40"/><path d="M241.7 298.9l-4.3 5.5" stroke="#e6e0dc" stroke-width=".8" opacity="0.40"/><path d="M241.7 302.4l-6.8 9.4" stroke="#e6e0dc" stroke-width=".8" opacity="0.40"/><path d="M241.8 305.9l-3.4 4.3" stroke="#e6e0dc" stroke-width=".8" opacity="0.40"/><path d="M170.4 215.3L173.5 230.7L175.7 246.1L177.3 261.5L178.4 276.9" stroke="#f4eee8" stroke-width="1.3" opacity="0.51" fill="none"/><path d="M170.4 215.3l7.4 4.7" stroke="#f4eee8" stroke-width=".8" opacity="0.36"/><path d="M171.4 220.4l4.5 2.5" stroke="#f4eee8" stroke-width=".8" opacity="0.36"/><path d="M172.4 225.6l6.9 4.1" stroke="#f4eee8" stroke-width=".8" opacity="0.36"/><path d="M173.5 230.7l8.5 7.9" stroke="#f4eee8" stroke-width=".8" opacity="0.36"/><path d="M174.2 235.8l8.5 6.9" stroke="#f4eee8" stroke-width=".8" opacity="0.36"/><path d="M175.0 241.0l4.5 2.8" stroke="#f4eee8" stroke-width=".8" opacity="0.36"/><path d="M175.7 246.1l4.3 4.7" stroke="#f4eee8" stroke-width=".8" opacity="0.36"/><path d="M176.3 251.2l4.8 5.0" stroke="#f4eee8" stroke-width=".8" opacity="0.36"/><path d="M176.8 256.4l7.3 5.0" stroke="#f4eee8" stroke-width=".8" opacity="0.36"/><path d="M125.2 228.8L123.3 241.2L121.8 253.6L120.7 265.9L119.9 278.3" stroke="#f8f6f4" stroke-width="1.7" opacity="0.40" fill="none"/><path d="M125.2 228.8l5.5 7.4" stroke="#f8f6f4" stroke-width=".8" opacity="0.28"/><path d="M124.6 232.9l7.6 9.1" stroke="#f8f6f4" stroke-width=".8" opacity="0.28"/><path d="M123.9 237.0l2.5 5.6" stroke="#f8f6f4" stroke-width=".8" opacity="0.28"/><path d="M123.3 241.2l2.2 4.9" stroke="#f8f6f4" stroke-width=".8" opacity="0.28"/><path d="M122.8 245.3l3.8 4.6" stroke="#f8f6f4" stroke-width=".8" opacity="0.28"/><path d="M122.3 249.4l6.7 8.0" stroke="#f8f6f4" stroke-width=".8" opacity="0.28"/><path d="M121.8 253.6l4.5 7.2" stroke="#f8f6f4" stroke-width=".8" opacity="0.28"/><path d="M121.5 257.7l5.4 7.0" stroke="#f8f6f4" stroke-width=".8" opacity="0.28"/><path d="M121.1 261.8l4.9 6.4" stroke="#f8f6f4" stroke-width=".8" opacity="0.28"/><path d="M181.3 219.9L185.7 237.0L188.8 254.1L190.9 271.2L192.1 288.3" stroke="#e6e0dc" stroke-width="1.7" opacity="0.35" fill="none"/><path d="M181.3 219.9l-2.3 6.0" stroke="#e6e0dc" stroke-width=".8" opacity="0.24"/><path d="M182.8 225.6l-4.0 6.9" stroke="#e6e0dc" stroke-width=".8" opacity="0.24"/><path d="M184.3 231.3l-2.8 5.2" stroke="#e6e0dc" stroke-width=".8" opacity="0.24"/><path d="M185.7 237.0l-2.6 7.4" stroke="#e6e0dc" stroke-width=".8" opacity="0.24"/><path d="M186.8 242.7l-3.8 10.9" stroke="#e6e0dc" stroke-width=".8" opacity="0.24"/><path d="M187.8 248.4l-2.8 6.0" stroke="#e6e0dc" stroke-width=".8" opacity="0.24"/><path d="M188.8 254.1l-3.6 8.6" stroke="#e6e0dc" stroke-width=".8" opacity="0.24"/><path d="M189.5 259.8l-6.5 7.6" stroke="#e6e0dc" stroke-width=".8" opacity="0.24"/><path d="M190.2 265.5l-5.8 7.2" stroke="#e6e0dc" stroke-width=".8" opacity="0.24"/><path d="M44.8 261.2L40.9 276.3L38.7 291.4L38.0 306.5L38.9 321.6" stroke="#f4eee8" stroke-width="1.4" opacity="0.37" fill="none"/><path d="M44.8 261.2l-7.9 7.3" stroke="#f4eee8" stroke-width=".8" opacity="0.26"/><path d="M43.5 266.2l-7.0 5.5" stroke="#f4eee8" stroke-width=".8" opacity="0.26"/><path d="M42.2 271.2l-10.4 5.6" stroke="#f4eee8" stroke-width=".8" opacity="0.26"/><path d="M40.9 276.3l-5.2 6.3" stroke="#f4eee8" stroke-width=".8" opacity="0.26"/><path d="M40.2 281.3l-7.6 7.8" stroke="#f4eee8" stroke-width=".8" opacity="0.26"/><path d="M39.4 286.3l-8.2 7.9" stroke="#f4eee8" stroke-width=".8" opacity="0.26"/><path d="M38.7 291.4l-6.0 5.2" stroke="#f4eee8" stroke-width=".8" opacity="0.26"/><path d="M38.4 296.4l-7.3 6.4" stroke="#f4eee8" stroke-width=".8" opacity="0.26"/><path d="M38.2 301.4l-3.9 5.9" stroke="#f4eee8" stroke-width=".8" opacity="0.26"/><path d="M69.1 360.8L73.8 373.2L79.9 385.6L87.8 398.1L98.3 410.5" stroke="#f8f6f4" stroke-width="1.7" opacity="0.55" fill="none"/><path d="M69.1 360.8l8.0 6.5" stroke="#f8f6f4" stroke-width=".8" opacity="0.39"/><path d="M70.7 364.9l4.9 4.0" stroke="#f8f6f4" stroke-width=".8" opacity="0.39"/><path d="M72.2 369.1l8.8 6.7" stroke="#f8f6f4" stroke-width=".8" opacity="0.39"/><path d="M73.8 373.2l6.5 3.1" stroke="#f8f6f4" stroke-width=".8" opacity="0.39"/><path d="M75.8 377.3l9.6 2.4" stroke="#f8f6f4" stroke-width=".8" opacity="0.39"/><path d="M77.9 381.5l5.5 1.6" stroke="#f8f6f4" stroke-width=".8" opacity="0.39"/><path d="M79.9 385.6l8.4 2.9" stroke="#f8f6f4" stroke-width=".8" opacity="0.39"/><path d="M82.5 389.8l6.1 2.9" stroke="#f8f6f4" stroke-width=".8" opacity="0.39"/><path d="M85.2 393.9l6.4 0.8" stroke="#f8f6f4" stroke-width=".8" opacity="0.39"/><path d="M256.3 279.2L258.2 294.9L258.5 310.5L257.2 326.2L254.1 341.9" stroke="#ece4dc" stroke-width="1.4" opacity="0.64" fill="none"/><path d="M256.3 279.2l4.7 5.2" stroke="#ece4dc" stroke-width=".8" opacity="0.45"/><path d="M256.9 284.4l5.6 3.8" stroke="#ece4dc" stroke-width=".8" opacity="0.45"/><path d="M257.6 289.6l3.8 4.7" stroke="#ece4dc" stroke-width=".8" opacity="0.45"/><path d="M258.2 294.9l8.2 6.9" stroke="#ece4dc" stroke-width=".8" opacity="0.45"/><path d="M258.3 300.1l5.7 8.4" stroke="#ece4dc" stroke-width=".8" opacity="0.45"/><path d="M258.4 305.3l5.3 7.7" stroke="#ece4dc" stroke-width=".8" opacity="0.45"/><path d="M258.5 310.5l3.7 8.3" stroke="#ece4dc" stroke-width=".8" opacity="0.45"/><path d="M258.1 315.7l5.6 6.5" stroke="#ece4dc" stroke-width=".8" opacity="0.45"/><path d="M257.6 321.0l3.6 4.6" stroke="#ece4dc" stroke-width=".8" opacity="0.45"/><path d="M139.4 350.8L139.8 362.9L140.4 375.1L141.1 387.3L142.0 399.5" stroke="#f4eee8" stroke-width="1.6" opacity="0.42" fill="none"/><path d="M139.4 350.8l-5.4 5.7" stroke="#f4eee8" stroke-width=".8" opacity="0.30"/><path d="M139.5 354.8l-4.6 6.0" stroke="#f4eee8" stroke-width=".8" opacity="0.30"/><path d="M139.7 358.9l-5.7 8.2" stroke="#f4eee8" stroke-width=".8" opacity="0.30"/><path d="M139.8 362.9l-6.7 7.7" stroke="#f4eee8" stroke-width=".8" opacity="0.30"/><path d="M140.0 367.0l-6.2 9.2" stroke="#f4eee8" stroke-width=".8" opacity="0.30"/><path d="M140.2 371.1l-5.1 10.4" stroke="#f4eee8" stroke-width=".8" opacity="0.30"/><path d="M140.4 375.1l-4.3 5.5" stroke="#f4eee8" stroke-width=".8" opacity="0.30"/><path d="M140.6 379.2l-3.8 7.9" stroke="#f4eee8" stroke-width=".8" opacity="0.30"/><path d="M140.9 383.2l-5.3 5.9" stroke="#f4eee8" stroke-width=".8" opacity="0.30"/><path d="M157.1 385.4L155.8 402.4L153.7 419.4L151.1 430.9L151.1 430.9" stroke="#ece4dc" stroke-width="1.4" opacity="0.69" fill="none"/><path d="M157.1 385.4l-6.7 5.4" stroke="#ece4dc" stroke-width=".8" opacity="0.48"/><path d="M156.6 391.1l-4.1 4.4" stroke="#ece4dc" stroke-width=".8" opacity="0.48"/><path d="M156.2 396.7l-5.9 7.0" stroke="#ece4dc" stroke-width=".8" opacity="0.48"/><path d="M155.8 402.4l-3.7 3.4" stroke="#ece4dc" stroke-width=".8" opacity="0.48"/><path d="M155.1 408.0l-9.0 5.8" stroke="#ece4dc" stroke-width=".8" opacity="0.48"/><path d="M154.4 413.7l-9.0 6.2" stroke="#ece4dc" stroke-width=".8" opacity="0.48"/><path d="M153.7 419.4l-7.1 4.6" stroke="#ece4dc" stroke-width=".8" opacity="0.48"/><path d="M152.8 423.2l-5.5 3.4" stroke="#ece4dc" stroke-width=".8" opacity="0.48"/><path d="M151.9 427.1l-7.0 4.5" stroke="#ece4dc" stroke-width=".8" opacity="0.48"/><path d="M241.0 262.9L244.4 278.8L246.2 294.7L246.5 310.5L245.3 326.4" stroke="#f4eee8" stroke-width="1.6" opacity="0.54" fill="none"/><path d="M241.0 262.9l-3.0 5.3" stroke="#f4eee8" stroke-width=".8" opacity="0.37"/><path d="M242.2 268.2l-4.7 6.5" stroke="#f4eee8" stroke-width=".8" opacity="0.37"/><path d="M243.3 273.5l-5.4 9.8" stroke="#f4eee8" stroke-width=".8" opacity="0.37"/><path d="M244.4 278.8l-3.6 7.7" stroke="#f4eee8" stroke-width=".8" opacity="0.37"/><path d="M245.0 284.1l-5.0 8.0" stroke="#f4eee8" stroke-width=".8" opacity="0.37"/><path d="M245.6 289.4l-3.1 5.9" stroke="#f4eee8" stroke-width=".8" opacity="0.37"/><path d="M246.2 294.7l-4.8 7.5" stroke="#f4eee8" stroke-width=".8" opacity="0.37"/><path d="M246.3 299.9l-6.5 9.5" stroke="#f4eee8" stroke-width=".8" opacity="0.37"/><path d="M246.4 305.2l-7.5 6.8" stroke="#f4eee8" stroke-width=".8" opacity="0.37"/><path d="M128.4 359.2L129.8 373.6L131.6 388.0L134.2 402.5L137.8 416.9" stroke="#f4eee8" stroke-width="1.6" opacity="0.68" fill="none"/><path d="M128.4 359.2l-5.0 7.9" stroke="#f4eee8" stroke-width=".8" opacity="0.48"/><path d="M128.8 364.0l-6.9 7.1" stroke="#f4eee8" stroke-width=".8" opacity="0.48"/><path d="M129.3 368.8l-2.9 6.2" stroke="#f4eee8" stroke-width=".8" opacity="0.48"/><path d="M129.8 373.6l-4.8 10.3" stroke="#f4eee8" stroke-width=".8" opacity="0.48"/><path d="M130.4 378.4l-3.8 7.7" stroke="#f4eee8" stroke-width=".8" opacity="0.48"/><path d="M131.0 383.2l-3.4 4.1" stroke="#f4eee8" stroke-width=".8" opacity="0.48"/><path d="M131.6 388.0l-4.6 8.1" stroke="#f4eee8" stroke-width=".8" opacity="0.48"/><path d="M132.5 392.9l-3.6 8.1" stroke="#f4eee8" stroke-width=".8" opacity="0.48"/><path d="M133.3 397.7l-4.0 8.6" stroke="#f4eee8" stroke-width=".8" opacity="0.48"/><path d="M159.7 246.2L160.4 263.0L160.8 279.8L161.0 296.6L161.0 313.5" stroke="#e6e0dc" stroke-width="1.0" opacity="0.44" fill="none"/><path d="M159.7 246.2l5.4 6.7" stroke="#e6e0dc" stroke-width=".8" opacity="0.31"/><path d="M159.9 251.8l6.0 7.6" stroke="#e6e0dc" stroke-width=".8" opacity="0.31"/><path d="M160.1 257.4l3.9 6.3" stroke="#e6e0dc" stroke-width=".8" opacity="0.31"/><path d="M160.4 263.0l5.8 5.8" stroke="#e6e0dc" stroke-width=".8" opacity="0.31"/><path d="M160.5 268.6l4.2 7.1" stroke="#e6e0dc" stroke-width=".8" opacity="0.31"/><path d="M160.7 274.2l6.8 5.4" stroke="#e6e0dc" stroke-width=".8" opacity="0.31"/><path d="M160.8 279.8l5.5 5.3" stroke="#e6e0dc" stroke-width=".8" opacity="0.31"/><path d="M160.9 285.4l6.8 5.4" stroke="#e6e0dc" stroke-width=".8" opacity="0.31"/><path d="M160.9 291.0l7.0 6.3" stroke="#e6e0dc" stroke-width=".8" opacity="0.31"/><path d="M222.4 270.7L224.6 289.1L225.2 307.5L224.3 325.9L221.7 344.3" stroke="#ece4dc" stroke-width="1.2" opacity="0.66" fill="none"/><path d="M222.4 270.7l-5.6 7.7" stroke="#ece4dc" stroke-width=".8" opacity="0.46"/><path d="M223.1 276.8l-3.3 4.9" stroke="#ece4dc" stroke-width=".8" opacity="0.46"/><path d="M223.9 282.9l-4.4 6.2" stroke="#ece4dc" stroke-width=".8" opacity="0.46"/><path d="M224.6 289.1l-3.6 5.8" stroke="#ece4dc" stroke-width=".8" opacity="0.46"/><path d="M224.8 295.2l-3.2 4.8" stroke="#ece4dc" stroke-width=".8" opacity="0.46"/><path d="M225.0 301.3l-2.8 4.3" stroke="#ece4dc" stroke-width=".8" opacity="0.46"/><path d="M225.2 307.5l-4.7 7.3" stroke="#ece4dc" stroke-width=".8" opacity="0.46"/><path d="M224.9 313.6l-3.7 5.7" stroke="#ece4dc" stroke-width=".8" opacity="0.46"/><path d="M224.6 319.7l-3.6 4.2" stroke="#ece4dc" stroke-width=".8" opacity="0.46"/><path d="M116.9 327.5L117.8 342.1L119.1 356.7L121.0 371.3L123.6 385.9" stroke="#f8f6f4" stroke-width="0.9" opacity="0.66" fill="none"/><path d="M116.9 327.5l5.6 7.3" stroke="#f8f6f4" stroke-width=".8" opacity="0.46"/><path d="M117.2 332.3l6.4 6.9" stroke="#f8f6f4" stroke-width=".8" opacity="0.46"/><path d="M117.5 337.2l6.6 5.4" stroke="#f8f6f4" stroke-width=".8" opacity="0.46"/><path d="M117.8 342.1l6.1 6.4" stroke="#f8f6f4" stroke-width=".8" opacity="0.46"/><path d="M118.2 346.9l7.0 9.0" stroke="#f8f6f4" stroke-width=".8" opacity="0.46"/><path d="M118.7 351.8l5.8 6.2" stroke="#f8f6f4" stroke-width=".8" opacity="0.46"/><path d="M119.1 356.7l8.9 6.2" stroke="#f8f6f4" stroke-width=".8" opacity="0.46"/><path d="M119.8 361.6l8.5 5.1" stroke="#f8f6f4" stroke-width=".8" opacity="0.46"/><path d="M120.4 366.4l6.0 5.3" stroke="#f8f6f4" stroke-width=".8" opacity="0.46"/><path d="M216.3 317.4L215.8 325.5L214.9 333.7L213.8 341.8L212.4 349.9" stroke="#f4eee8" stroke-width="1.2" opacity="0.57" fill="none"/><path d="M216.3 317.4l-8.5 7.3" stroke="#f4eee8" stroke-width=".8" opacity="0.40"/><path d="M216.1 320.1l-6.1 7.5" stroke="#f4eee8" stroke-width=".8" opacity="0.40"/><path d="M216.0 322.8l-5.3 5.2" stroke="#f4eee8" stroke-width=".8" opacity="0.40"/><path d="M215.8 325.5l-3.7 4.2" stroke="#f4eee8" stroke-width=".8" opacity="0.40"/><path d="M215.5 328.2l-5.6 4.1" stroke="#f4eee8" stroke-width=".8" opacity="0.40"/><path d="M215.2 330.9l-4.6 5.0" stroke="#f4eee8" stroke-width=".8" opacity="0.40"/><path d="M214.9 333.7l-6.4 5.5" stroke="#f4eee8" stroke-width=".8" opacity="0.40"/><path d="M214.6 336.4l-4.6 3.1" stroke="#f4eee8" stroke-width=".8" opacity="0.40"/><path d="M214.2 339.1l-7.6 7.8" stroke="#f4eee8" stroke-width=".8" opacity="0.40"/><path d="M192.1 203.4L200.3 216.4L206.4 229.4L211.2 242.4L214.7 255.4" stroke="#f4eee8" stroke-width="1.1" opacity="0.69" fill="none"/><path d="M192.1 203.4l5.1 2.0" stroke="#f4eee8" stroke-width=".8" opacity="0.48"/><path d="M194.8 207.7l5.8 0.9" stroke="#f4eee8" stroke-width=".8" opacity="0.48"/><path d="M197.6 212.1l8.1 0.9" stroke="#f4eee8" stroke-width=".8" opacity="0.48"/><path d="M200.3 216.4l8.0 2.4" stroke="#f4eee8" stroke-width=".8" opacity="0.48"/><path d="M202.3 220.7l9.9 2.7" stroke="#f4eee8" stroke-width=".8" opacity="0.48"/><path d="M204.4 225.1l4.4 2.7" stroke="#f4eee8" stroke-width=".8" opacity="0.48"/><path d="M206.4 229.4l7.3 5.6" stroke="#f4eee8" stroke-width=".8" opacity="0.48"/><path d="M208.0 233.7l4.3 3.5" stroke="#f4eee8" stroke-width=".8" opacity="0.48"/><path d="M209.6 238.1l4.5 2.9" stroke="#f4eee8" stroke-width=".8" opacity="0.48"/><path d="M102.4 319.4L103.0 329.9L103.9 340.5L105.2 351.0L106.9 361.6" stroke="#f4eee8" stroke-width="1.2" opacity="0.40" fill="none"/><path d="M102.4 319.4l-7.9 7.7" stroke="#f4eee8" stroke-width=".8" opacity="0.28"/><path d="M102.6 322.9l-3.5 6.1" stroke="#f4eee8" stroke-width=".8" opacity="0.28"/><path d="M102.8 326.4l-4.3 4.8" stroke="#f4eee8" stroke-width=".8" opacity="0.28"/><path d="M103.0 329.9l-4.1 5.4" stroke="#f4eee8" stroke-width=".8" opacity="0.28"/><path d="M103.3 333.5l-4.7 5.5" stroke="#f4eee8" stroke-width=".8" opacity="0.28"/><path d="M103.6 337.0l-6.5 6.6" stroke="#f4eee8" stroke-width=".8" opacity="0.28"/><path d="M103.9 340.5l-4.5 6.0" stroke="#f4eee8" stroke-width=".8" opacity="0.28"/><path d="M104.3 344.0l-4.3 6.2" stroke="#f4eee8" stroke-width=".8" opacity="0.28"/><path d="M104.8 347.5l-4.5 7.4" stroke="#f4eee8" stroke-width=".8" opacity="0.28"/><path d="M53.5 327.5L57.2 346.5L63.4 365.5L72.7 384.5L86.6 403.5" stroke="#ece4dc" stroke-width="1.3" opacity="0.50" fill="none"/><path d="M53.5 327.5l-5.8 9.8" stroke="#ece4dc" stroke-width=".8" opacity="0.35"/><path d="M54.8 333.9l-5.2 9.2" stroke="#ece4dc" stroke-width=".8" opacity="0.35"/><path d="M56.0 340.2l-5.2 6.9" stroke="#ece4dc" stroke-width=".8" opacity="0.35"/><path d="M57.2 346.5l-3.3 5.8" stroke="#ece4dc" stroke-width=".8" opacity="0.35"/><path d="M59.3 352.8l-2.6 4.8" stroke="#ece4dc" stroke-width=".8" opacity="0.35"/><path d="M61.3 359.2l-5.0 10.3" stroke="#ece4dc" stroke-width=".8" opacity="0.35"/><path d="M63.4 365.5l-1.0 8.8" stroke="#ece4dc" stroke-width=".8" opacity="0.35"/><path d="M66.5 371.8l-1.4 7.8" stroke="#ece4dc" stroke-width=".8" opacity="0.35"/><path d="M69.6 378.1l-1.8 8.9" stroke="#ece4dc" stroke-width=".8" opacity="0.35"/><path d="M41.5 264.9L38.8 275.1L37.0 285.4L35.9 295.6L35.6 305.9" stroke="#f8f6f4" stroke-width="0.9" opacity="0.63" fill="none"/><path d="M41.5 264.9l-7.2 4.0" stroke="#f8f6f4" stroke-width=".8" opacity="0.44"/><path d="M40.6 268.3l-8.3 5.3" stroke="#f8f6f4" stroke-width=".8" opacity="0.44"/><path d="M39.7 271.7l-8.5 7.9" stroke="#f8f6f4" stroke-width=".8" opacity="0.44"/><path d="M38.8 275.1l-4.1 4.0" stroke="#f8f6f4" stroke-width=".8" opacity="0.44"/><path d="M38.2 278.5l-7.7 4.3" stroke="#f8f6f4" stroke-width=".8" opacity="0.44"/><path d="M37.6 282.0l-6.2 3.4" stroke="#f8f6f4" stroke-width=".8" opacity="0.44"/><path d="M37.0 285.4l-4.1 4.0" stroke="#f8f6f4" stroke-width=".8" opacity="0.44"/><path d="M36.6 288.8l-4.4 3.7" stroke="#f8f6f4" stroke-width=".8" opacity="0.44"/><path d="M36.3 292.2l-3.6 5.2" stroke="#f8f6f4" stroke-width=".8" opacity="0.44"/><path d="M248.5 336.2L243.7 354.3L236.4 372.4L225.6 390.5L209.7 408.6" stroke="#f8f6f4" stroke-width="1.6" opacity="0.55" fill="none"/><path d="M248.5 336.2l1.9 5.8" stroke="#f8f6f4" stroke-width=".8" opacity="0.38"/><path d="M246.9 342.2l3.9 6.0" stroke="#f8f6f4" stroke-width=".8" opacity="0.38"/><path d="M245.3 348.2l2.7 8.6" stroke="#f8f6f4" stroke-width=".8" opacity="0.38"/><path d="M243.7 354.3l2.8 9.8" stroke="#f8f6f4" stroke-width=".8" opacity="0.38"/><path d="M241.3 360.3l1.6 8.4" stroke="#f8f6f4" stroke-width=".8" opacity="0.38"/><path d="M238.8 366.3l3.0 5.5" stroke="#f8f6f4" stroke-width=".8" opacity="0.38"/><path d="M236.4 372.4l0.9 7.7" stroke="#f8f6f4" stroke-width=".8" opacity="0.38"/><path d="M232.8 378.4l0.1 6.0" stroke="#f8f6f4" stroke-width=".8" opacity="0.38"/><path d="M229.2 384.5l0.8 8.8" stroke="#f8f6f4" stroke-width=".8" opacity="0.38"/><path d="M61.3 320.2L62.7 332.4L65.0 344.6L68.1 356.8L72.4 369.0" stroke="#f8f6f4" stroke-width="1.2" opacity="0.61" fill="none"/><path d="M61.3 320.2l-3.1 6.4" stroke="#f8f6f4" stroke-width=".8" opacity="0.43"/><path d="M61.8 324.3l-3.6 8.2" stroke="#f8f6f4" stroke-width=".8" opacity="0.43"/><path d="M62.3 328.4l-2.8 5.0" stroke="#f8f6f4" stroke-width=".8" opacity="0.43"/><path d="M62.7 332.4l-2.4 5.2" stroke="#f8f6f4" stroke-width=".8" opacity="0.43"/><path d="M63.5 336.5l-3.8 8.2" stroke="#f8f6f4" stroke-width=".8" opacity="0.43"/><path d="M64.2 340.6l-6.1 8.4" stroke="#f8f6f4" stroke-width=".8" opacity="0.43"/><path d="M65.0 344.6l-3.3 7.0" stroke="#f8f6f4" stroke-width=".8" opacity="0.43"/><path d="M66.0 348.7l-3.3 10.6" stroke="#f8f6f4" stroke-width=".8" opacity="0.43"/><path d="M67.1 352.8l-3.0 6.3" stroke="#f8f6f4" stroke-width=".8" opacity="0.43"/><path d="M88.6 225.7L83.6 237.4L79.7 249.1L76.6 260.8L74.4 272.5" stroke="#ece4dc" stroke-width="1.0" opacity="0.56" fill="none"/><path d="M88.6 225.7l-4.9 3.5" stroke="#ece4dc" stroke-width=".8" opacity="0.39"/><path d="M87.0 229.6l-4.9 2.1" stroke="#ece4dc" stroke-width=".8" opacity="0.39"/><path d="M85.3 233.5l-9.8 5.0" stroke="#ece4dc" stroke-width=".8" opacity="0.39"/><path d="M83.6 237.4l-8.4 3.8" stroke="#ece4dc" stroke-width=".8" opacity="0.39"/><path d="M82.3 241.3l-5.1 2.8" stroke="#ece4dc" stroke-width=".8" opacity="0.39"/><path d="M81.0 245.2l-11.0 4.0" stroke="#ece4dc" stroke-width=".8" opacity="0.39"/><path d="M79.7 249.1l-5.4 3.0" stroke="#ece4dc" stroke-width=".8" opacity="0.39"/><path d="M78.7 253.0l-6.3 6.1" stroke="#ece4dc" stroke-width=".8" opacity="0.39"/><path d="M77.7 256.9l-6.2 5.8" stroke="#ece4dc" stroke-width=".8" opacity="0.39"/><path d="M178.0 208.1L181.7 218.3L184.7 228.5L187.1 238.7L189.1 248.9" stroke="#ece4dc" stroke-width="0.9" opacity="0.45" fill="none"/><path d="M178.0 208.1l7.0 2.3" stroke="#ece4dc" stroke-width=".8" opacity="0.32"/><path d="M179.2 211.5l4.2 3.6" stroke="#ece4dc" stroke-width=".8" opacity="0.32"/><path d="M180.5 214.9l6.5 3.6" stroke="#ece4dc" stroke-width=".8" opacity="0.32"/><path d="M181.7 218.3l7.0 3.6" stroke="#ece4dc" stroke-width=".8" opacity="0.32"/><path d="M182.7 221.7l4.8 3.9" stroke="#ece4dc" stroke-width=".8" opacity="0.32"/><path d="M183.7 225.1l9.6 3.9" stroke="#ece4dc" stroke-width=".8" opacity="0.32"/><path d="M184.7 228.5l5.5 3.5" stroke="#ece4dc" stroke-width=".8" opacity="0.32"/><path d="M185.5 231.9l8.1 6.3" stroke="#ece4dc" stroke-width=".8" opacity="0.32"/><path d="M186.3 235.3l5.8 3.8" stroke="#ece4dc" stroke-width=".8" opacity="0.32"/><path d="M115.6 356.4L116.8 365.0L118.2 373.6L119.9 382.2L121.9 390.8" stroke="#f4eee8" stroke-width="1.6" opacity="0.43" fill="none"/><path d="M115.6 356.4l-3.8 9.1" stroke="#f4eee8" stroke-width=".8" opacity="0.30"/><path d="M116.0 359.3l-2.9 5.1" stroke="#f4eee8" stroke-width=".8" opacity="0.30"/><path d="M116.4 362.2l-4.6 5.1" stroke="#f4eee8" stroke-width=".8" opacity="0.30"/><path d="M116.8 365.0l-3.6 6.2" stroke="#f4eee8" stroke-width=".8" opacity="0.30"/><path d="M117.2 367.9l-2.6 6.5" stroke="#f4eee8" stroke-width=".8" opacity="0.30"/><path d="M117.7 370.8l-5.2 7.9" stroke="#f4eee8" stroke-width=".8" opacity="0.30"/><path d="M118.2 373.6l-3.5 5.0" stroke="#f4eee8" stroke-width=".8" opacity="0.30"/><path d="M118.7 376.5l-4.4 9.9" stroke="#f4eee8" stroke-width=".8" opacity="0.30"/><path d="M119.3 379.4l-5.0 8.8" stroke="#f4eee8" stroke-width=".8" opacity="0.30"/><path d="M139.9 276.3L139.8 284.7L139.7 293.1L139.7 301.4L139.7 309.8" stroke="#f4eee8" stroke-width="1.5" opacity="0.66" fill="none"/><path d="M139.9 276.3l4.4 6.5" stroke="#f4eee8" stroke-width=".8" opacity="0.46"/><path d="M139.9 279.1l6.5 5.7" stroke="#f4eee8" stroke-width=".8" opacity="0.46"/><path d="M139.8 281.9l8.6 7.9" stroke="#f4eee8" stroke-width=".8" opacity="0.46"/><path d="M139.8 284.7l6.5 6.0" stroke="#f4eee8" stroke-width=".8" opacity="0.46"/><path d="M139.8 287.5l4.8 7.7" stroke="#f4eee8" stroke-width=".8" opacity="0.46"/><path d="M139.7 290.3l6.2 7.2" stroke="#f4eee8" stroke-width=".8" opacity="0.46"/><path d="M139.7 293.1l8.7 7.0" stroke="#f4eee8" stroke-width=".8" opacity="0.46"/><path d="M139.7 295.9l5.9 10.0" stroke="#f4eee8" stroke-width=".8" opacity="0.46"/><path d="M139.7 298.6l7.8 6.8" stroke="#f4eee8" stroke-width=".8" opacity="0.46"/><path d="M151.5 265.8L151.6 277.5L151.6 289.2L151.7 300.9L151.7 312.6" stroke="#f8f6f4" stroke-width="1.2" opacity="0.65" fill="none"/><path d="M151.5 265.8l-4.4 6.7" stroke="#f8f6f4" stroke-width=".8" opacity="0.46"/><path d="M151.5 269.7l-5.2 7.5" stroke="#f8f6f4" stroke-width=".8" opacity="0.46"/><path d="M151.6 273.6l-4.2 6.3" stroke="#f8f6f4" stroke-width=".8" opacity="0.46"/><path d="M151.6 277.5l-5.8 6.0" stroke="#f8f6f4" stroke-width=".8" opacity="0.46"/><path d="M151.6 281.4l-3.8 5.0" stroke="#f8f6f4" stroke-width=".8" opacity="0.46"/><path d="M151.6 285.3l-4.1 4.3" stroke="#f8f6f4" stroke-width=".8" opacity="0.46"/><path d="M151.6 289.2l-7.9 6.6" stroke="#f8f6f4" stroke-width=".8" opacity="0.46"/><path d="M151.6 293.1l-3.7 4.0" stroke="#f8f6f4" stroke-width=".8" opacity="0.46"/><path d="M151.6 297.0l-6.3 7.3" stroke="#f8f6f4" stroke-width=".8" opacity="0.46"/><path d="M210.1 355.4L205.0 374.1L197.6 392.7L186.3 411.4L164.3 430.1" stroke="#f8f6f4" stroke-width="0.9" opacity="0.69" fill="none"/><path d="M210.1 355.4l3.0 9.3" stroke="#f8f6f4" stroke-width=".8" opacity="0.48"/><path d="M208.4 361.6l3.5 11.3" stroke="#f8f6f4" stroke-width=".8" opacity="0.48"/><path d="M206.7 367.8l6.8 9.8" stroke="#f8f6f4" stroke-width=".8" opacity="0.48"/><path d="M205.0 374.1l2.2 5.9" stroke="#f8f6f4" stroke-width=".8" opacity="0.48"/><path d="M202.6 380.3l2.0 9.8" stroke="#f8f6f4" stroke-width=".8" opacity="0.48"/><path d="M200.1 386.5l2.9 9.5" stroke="#f8f6f4" stroke-width=".8" opacity="0.48"/><path d="M197.6 392.7l0.4 9.0" stroke="#f8f6f4" stroke-width=".8" opacity="0.48"/><path d="M193.8 399.0l2.1 6.7" stroke="#f8f6f4" stroke-width=".8" opacity="0.48"/><path d="M190.0 405.2l1.7 5.8" stroke="#f8f6f4" stroke-width=".8" opacity="0.48"/><path d="M171.2 198.8L175.6 209.6L179.0 220.3L181.7 231.0L183.9 241.8" stroke="#f4eee8" stroke-width="1.7" opacity="0.32" fill="none"/><path d="M171.2 198.8l-4.5 9.7" stroke="#f4eee8" stroke-width=".8" opacity="0.22"/><path d="M172.7 202.4l-3.1 6.0" stroke="#f4eee8" stroke-width=".8" opacity="0.22"/><path d="M174.2 206.0l-3.7 7.1" stroke="#f4eee8" stroke-width=".8" opacity="0.22"/><path d="M175.6 209.6l-4.5 9.0" stroke="#f4eee8" stroke-width=".8" opacity="0.22"/><path d="M176.8 213.1l-2.1 6.6" stroke="#f4eee8" stroke-width=".8" opacity="0.22"/><path d="M177.9 216.7l-2.7 6.9" stroke="#f4eee8" stroke-width=".8" opacity="0.22"/><path d="M179.0 220.3l-5.7 9.5" stroke="#f4eee8" stroke-width=".8" opacity="0.22"/><path d="M179.9 223.9l-2.6 4.6" stroke="#f4eee8" stroke-width=".8" opacity="0.22"/><path d="M180.8 227.4l-5.6 8.7" stroke="#f4eee8" stroke-width=".8" opacity="0.22"/><path d="M243.2 228.8L253.8 247.3L260.8 265.7L265.0 284.2L266.6 302.6" stroke="#e6e0dc" stroke-width="1.8" opacity="0.57" fill="none"/><path d="M243.2 228.8l-0.0 7.5" stroke="#e6e0dc" stroke-width=".8" opacity="0.40"/><path d="M246.7 235.0l-1.3 8.6" stroke="#e6e0dc" stroke-width=".8" opacity="0.40"/><path d="M250.3 241.1l-0.7 11.8" stroke="#e6e0dc" stroke-width=".8" opacity="0.40"/><path d="M253.8 247.3l-2.4 8.2" stroke="#e6e0dc" stroke-width=".8" opacity="0.40"/><path d="M256.1 253.4l-2.8 8.3" stroke="#e6e0dc" stroke-width=".8" opacity="0.40"/><path d="M258.5 259.6l-2.3 5.3" stroke="#e6e0dc" stroke-width=".8" opacity="0.40"/><path d="M260.8 265.7l-4.5 8.6" stroke="#e6e0dc" stroke-width=".8" opacity="0.40"/><path d="M262.2 271.9l-2.8 5.4" stroke="#e6e0dc" stroke-width=".8" opacity="0.40"/><path d="M263.6 278.0l-3.1 8.1" stroke="#e6e0dc" stroke-width=".8" opacity="0.40"/><path d="M91.8 304.7L92.2 320.4L93.4 336.1L95.7 351.9L99.0 367.6" stroke="#f4eee8" stroke-width="1.6" opacity="0.38" fill="none"/><path d="M91.8 304.7l4.8 5.5" stroke="#f4eee8" stroke-width=".8" opacity="0.27"/><path d="M91.9 309.9l4.6 5.1" stroke="#f4eee8" stroke-width=".8" opacity="0.27"/><path d="M92.0 315.2l6.1 5.3" stroke="#f4eee8" stroke-width=".8" opacity="0.27"/><path d="M92.2 320.4l3.5 4.7" stroke="#f4eee8" stroke-width=".8" opacity="0.27"/><path d="M92.6 325.7l6.7 7.3" stroke="#f4eee8" stroke-width=".8" opacity="0.27"/><path d="M93.0 330.9l6.6 6.1" stroke="#f4eee8" stroke-width=".8" opacity="0.27"/><path d="M93.4 336.1l5.5 5.2" stroke="#f4eee8" stroke-width=".8" opacity="0.27"/><path d="M94.2 341.4l4.8 3.8" stroke="#f4eee8" stroke-width=".8" opacity="0.27"/><path d="M94.9 346.6l7.0 5.2" stroke="#f4eee8" stroke-width=".8" opacity="0.27"/><path d="M221.9 240.8L227.4 258.1L231.1 275.4L233.0 292.8L233.4 310.1" stroke="#e6e0dc" stroke-width="1.7" opacity="0.48" fill="none"/><path d="M221.9 240.8l-5.4 10.3" stroke="#e6e0dc" stroke-width=".8" opacity="0.34"/><path d="M223.7 246.6l-1.4 5.8" stroke="#e6e0dc" stroke-width=".8" opacity="0.34"/><path d="M225.6 252.3l-1.7 5.8" stroke="#e6e0dc" stroke-width=".8" opacity="0.34"/><path d="M227.4 258.1l-4.1 8.4" stroke="#e6e0dc" stroke-width=".8" opacity="0.34"/><path d="M228.7 263.9l-5.8 10.0" stroke="#e6e0dc" stroke-width=".8" opacity="0.34"/><path d="M229.9 269.7l-3.7 5.1" stroke="#e6e0dc" stroke-width=".8" opacity="0.34"/><path d="M231.1 275.4l-6.1 7.9" stroke="#e6e0dc" stroke-width=".8" opacity="0.34"/><path d="M231.7 281.2l-6.1 8.2" stroke="#e6e0dc" stroke-width=".8" opacity="0.34"/><path d="M232.4 287.0l-2.5 5.5" stroke="#e6e0dc" stroke-width=".8" opacity="0.34"/><path d="M146.8 286.5L146.8 295.1L146.8 303.8L146.8 312.4L146.8 321.1" stroke="#f4eee8" stroke-width="1.4" opacity="0.38" fill="none"/><path d="M146.8 286.5l-5.7 10.0" stroke="#f4eee8" stroke-width=".8" opacity="0.26"/><path d="M146.8 289.4l-4.8 4.1" stroke="#f4eee8" stroke-width=".8" opacity="0.26"/><path d="M146.8 292.2l-6.7 9.6" stroke="#f4eee8" stroke-width=".8" opacity="0.26"/><path d="M146.8 295.1l-3.0 5.3" stroke="#f4eee8" stroke-width=".8" opacity="0.26"/><path d="M146.8 298.0l-6.6 8.7" stroke="#f4eee8" stroke-width=".8" opacity="0.26"/><path d="M146.8 300.9l-4.4 7.5" stroke="#f4eee8" stroke-width=".8" opacity="0.26"/><path d="M146.8 303.8l-6.8 6.5" stroke="#f4eee8" stroke-width=".8" opacity="0.26"/><path d="M146.8 306.7l-6.0 7.5" stroke="#f4eee8" stroke-width=".8" opacity="0.26"/><path d="M146.8 309.5l-5.9 5.9" stroke="#f4eee8" stroke-width=".8" opacity="0.26"/><path d="M93.2 319.7L94.6 336.7L97.0 353.8L100.7 370.8L106.0 387.8" stroke="#f4eee8" stroke-width="1.4" opacity="0.31" fill="none"/><path d="M93.2 319.7l5.4 5.9" stroke="#f4eee8" stroke-width=".8" opacity="0.22"/><path d="M93.7 325.4l7.3 7.8" stroke="#f4eee8" stroke-width=".8" opacity="0.22"/><path d="M94.1 331.1l6.3 6.0" stroke="#f4eee8" stroke-width=".8" opacity="0.22"/><path d="M94.6 336.7l6.7 4.8" stroke="#f4eee8" stroke-width=".8" opacity="0.22"/><path d="M95.4 342.4l5.9 3.7" stroke="#f4eee8" stroke-width=".8" opacity="0.22"/><path d="M96.2 348.1l6.7 5.7" stroke="#f4eee8" stroke-width=".8" opacity="0.22"/><path d="M97.0 353.8l4.2 3.9" stroke="#f4eee8" stroke-width=".8" opacity="0.22"/><path d="M98.3 359.4l7.1 5.0" stroke="#f4eee8" stroke-width=".8" opacity="0.22"/><path d="M99.5 365.1l3.8 4.3" stroke="#f4eee8" stroke-width=".8" opacity="0.22"/><path d="M183.4 302.3L183.2 317.5L182.6 332.8L181.4 348.0L179.7 363.2" stroke="#e6e0dc" stroke-width="1.6" opacity="0.66" fill="none"/><path d="M183.4 302.3l8.0 7.8" stroke="#e6e0dc" stroke-width=".8" opacity="0.46"/><path d="M183.3 307.4l3.8 5.7" stroke="#e6e0dc" stroke-width=".8" opacity="0.46"/><path d="M183.3 312.5l5.7 5.3" stroke="#e6e0dc" stroke-width=".8" opacity="0.46"/><path d="M183.2 317.5l4.1 7.5" stroke="#e6e0dc" stroke-width=".8" opacity="0.46"/><path d="M183.0 322.6l5.0 8.0" stroke="#e6e0dc" stroke-width=".8" opacity="0.46"/><path d="M182.8 327.7l3.6 5.0" stroke="#e6e0dc" stroke-width=".8" opacity="0.46"/><path d="M182.6 332.8l7.4 8.4" stroke="#e6e0dc" stroke-width=".8" opacity="0.46"/><path d="M182.2 337.9l3.0 5.7" stroke="#e6e0dc" stroke-width=".8" opacity="0.46"/><path d="M181.8 342.9l3.6 5.0" stroke="#e6e0dc" stroke-width=".8" opacity="0.46"/><path d="M259.0 279.6L260.3 288.5L261.1 297.3L261.3 306.1L261.0 314.9" stroke="#ece4dc" stroke-width="0.8" opacity="0.30" fill="none"/><path d="M259.0 279.6l8.7 7.0" stroke="#ece4dc" stroke-width=".8" opacity="0.21"/><path d="M259.5 282.6l6.4 6.1" stroke="#ece4dc" stroke-width=".8" opacity="0.21"/><path d="M259.9 285.5l7.3 4.3" stroke="#ece4dc" stroke-width=".8" opacity="0.21"/><path d="M260.3 288.5l7.5 8.2" stroke="#ece4dc" stroke-width=".8" opacity="0.21"/><path d="M260.6 291.4l6.0 5.2" stroke="#ece4dc" stroke-width=".8" opacity="0.21"/><path d="M260.8 294.4l5.3 4.1" stroke="#ece4dc" stroke-width=".8" opacity="0.21"/><path d="M261.1 297.3l3.6 5.6" stroke="#ece4dc" stroke-width=".8" opacity="0.21"/><path d="M261.2 300.2l6.7 8.7" stroke="#ece4dc" stroke-width=".8" opacity="0.21"/><path d="M261.3 303.2l3.2 4.5" stroke="#ece4dc" stroke-width=".8" opacity="0.21"/><path d="M61.0 354.2L65.9 367.8L72.4 381.4L81.0 395.0L92.7 408.7" stroke="#f4eee8" stroke-width="0.9" opacity="0.43" fill="none"/><path d="M61.0 354.2l6.1 3.9" stroke="#f4eee8" stroke-width=".8" opacity="0.30"/><path d="M62.6 358.7l6.6 2.3" stroke="#f4eee8" stroke-width=".8" opacity="0.30"/><path d="M64.3 363.3l6.3 3.6" stroke="#f4eee8" stroke-width=".8" opacity="0.30"/><path d="M65.9 367.8l5.4 1.8" stroke="#f4eee8" stroke-width=".8" opacity="0.30"/><path d="M68.1 372.3l9.7 4.1" stroke="#f4eee8" stroke-width=".8" opacity="0.30"/><path d="M70.2 376.9l6.7 2.3" stroke="#f4eee8" stroke-width=".8" opacity="0.30"/><path d="M72.4 381.4l7.2 1.2" stroke="#f4eee8" stroke-width=".8" opacity="0.30"/><path d="M75.3 386.0l5.7 1.4" stroke="#f4eee8" stroke-width=".8" opacity="0.30"/><path d="M78.1 390.5l10.5 4.5" stroke="#f4eee8" stroke-width=".8" opacity="0.30"/><path d="M201.3 353.6L199.1 364.0L196.5 374.5L193.2 385.0L189.1 395.5" stroke="#f4eee8" stroke-width="1.5" opacity="0.35" fill="none"/><path d="M201.3 353.6l5.2 7.2" stroke="#f4eee8" stroke-width=".8" opacity="0.25"/><path d="M200.6 357.1l3.4 6.3" stroke="#f4eee8" stroke-width=".8" opacity="0.25"/><path d="M199.9 360.6l4.9 5.9" stroke="#f4eee8" stroke-width=".8" opacity="0.25"/><path d="M199.1 364.0l3.0 9.8" stroke="#f4eee8" stroke-width=".8" opacity="0.25"/><path d="M198.3 367.5l2.5 7.5" stroke="#f4eee8" stroke-width=".8" opacity="0.25"/><path d="M197.4 371.0l1.8 6.2" stroke="#f4eee8" stroke-width=".8" opacity="0.25"/><path d="M196.5 374.5l3.3 10.6" stroke="#f4eee8" stroke-width=".8" opacity="0.25"/><path d="M195.4 378.0l3.2 7.8" stroke="#f4eee8" stroke-width=".8" opacity="0.25"/><path d="M194.3 381.5l4.1 10.9" stroke="#f4eee8" stroke-width=".8" opacity="0.25"/><path d="M198.2 241.4L200.9 253.1L202.9 264.9L204.4 276.7L205.3 288.5" stroke="#f4eee8" stroke-width="1.5" opacity="0.54" fill="none"/><path d="M198.2 241.4l5.4 3.7" stroke="#f4eee8" stroke-width=".8" opacity="0.38"/><path d="M199.1 245.3l7.2 7.1" stroke="#f4eee8" stroke-width=".8" opacity="0.38"/><path d="M200.0 249.2l8.2 5.6" stroke="#f4eee8" stroke-width=".8" opacity="0.38"/><path d="M200.9 253.1l5.7 3.1" stroke="#f4eee8" stroke-width=".8" opacity="0.38"/><path d="M201.5 257.1l6.0 6.1" stroke="#f4eee8" stroke-width=".8" opacity="0.38"/><path d="M202.2 261.0l4.6 4.7" stroke="#f4eee8" stroke-width=".8" opacity="0.38"/><path d="M202.9 264.9l7.0 9.6" stroke="#f4eee8" stroke-width=".8" opacity="0.38"/><path d="M203.4 268.8l6.7 5.2" stroke="#f4eee8" stroke-width=".8" opacity="0.38"/><path d="M203.9 272.8l4.7 6.1" stroke="#f4eee8" stroke-width=".8" opacity="0.38"/><path d="M175.9 234.7L177.8 248.5L179.3 262.2L180.4 276.0L181.0 289.7" stroke="#f4eee8" stroke-width="0.8" opacity="0.61" fill="none"/><path d="M175.9 234.7l4.9 5.9" stroke="#f4eee8" stroke-width=".8" opacity="0.42"/><path d="M176.5 239.3l6.3 7.3" stroke="#f4eee8" stroke-width=".8" opacity="0.42"/><path d="M177.2 243.9l8.2 7.5" stroke="#f4eee8" stroke-width=".8" opacity="0.42"/><path d="M177.8 248.5l9.4 6.1" stroke="#f4eee8" stroke-width=".8" opacity="0.42"/><path d="M178.3 253.1l6.3 7.1" stroke="#f4eee8" stroke-width=".8" opacity="0.42"/><path d="M178.8 257.6l6.7 4.3" stroke="#f4eee8" stroke-width=".8" opacity="0.42"/><path d="M179.3 262.2l8.1 8.7" stroke="#f4eee8" stroke-width=".8" opacity="0.42"/><path d="M179.7 266.8l3.7 3.5" stroke="#f4eee8" stroke-width=".8" opacity="0.42"/><path d="M180.0 271.4l4.2 4.1" stroke="#f4eee8" stroke-width=".8" opacity="0.42"/><path d="M51.8 370.1L61.9 386.6L76.1 403.1L97.8 419.5L126.6 430.9" stroke="#e6e0dc" stroke-width="1.7" opacity="0.53" fill="none"/><path d="M51.8 370.1l4.7 2.6" stroke="#e6e0dc" stroke-width=".8" opacity="0.37"/><path d="M55.2 375.6l6.4 2.2" stroke="#e6e0dc" stroke-width=".8" opacity="0.37"/><path d="M58.5 381.1l11.4 3.0" stroke="#e6e0dc" stroke-width=".8" opacity="0.37"/><path d="M61.9 386.6l10.7 1.8" stroke="#e6e0dc" stroke-width=".8" opacity="0.37"/><path d="M66.6 392.1l9.6 3.1" stroke="#e6e0dc" stroke-width=".8" opacity="0.37"/><path d="M71.4 397.6l10.6 3.0" stroke="#e6e0dc" stroke-width=".8" opacity="0.37"/><path d="M76.1 403.1l7.5 -0.5" stroke="#e6e0dc" stroke-width=".8" opacity="0.37"/><path d="M83.3 408.5l6.6 -0.1" stroke="#e6e0dc" stroke-width=".8" opacity="0.37"/><path d="M90.6 414.0l8.3 -1.2" stroke="#e6e0dc" stroke-width=".8" opacity="0.37"/><path d="M71.3 247.4L67.6 259.6L64.9 271.9L63.0 284.1L62.0 296.4" stroke="#f8f6f4" stroke-width="0.8" opacity="0.33" fill="none"/><path d="M71.3 247.4l2.4 4.4" stroke="#f8f6f4" stroke-width=".8" opacity="0.23"/><path d="M70.1 251.5l3.0 5.7" stroke="#f8f6f4" stroke-width=".8" opacity="0.23"/><path d="M68.8 255.5l4.2 9.8" stroke="#f8f6f4" stroke-width=".8" opacity="0.23"/><path d="M67.6 259.6l4.2 10.0" stroke="#f8f6f4" stroke-width=".8" opacity="0.23"/><path d="M66.7 263.7l2.2 6.8" stroke="#f8f6f4" stroke-width=".8" opacity="0.23"/><path d="M65.8 267.8l1.7 5.8" stroke="#f8f6f4" stroke-width=".8" opacity="0.23"/><path d="M64.9 271.9l6.7 9.3" stroke="#f8f6f4" stroke-width=".8" opacity="0.23"/><path d="M64.2 276.0l4.0 5.2" stroke="#f8f6f4" stroke-width=".8" opacity="0.23"/><path d="M63.6 280.0l5.3 7.8" stroke="#f8f6f4" stroke-width=".8" opacity="0.23"/><path d="M115.9 203.5L107.8 221.2L102.2 238.8L98.4 256.5L95.9 274.2" stroke="#f8f6f4" stroke-width="0.8" opacity="0.68" fill="none"/><path d="M115.9 203.5l-4.5 2.9" stroke="#f8f6f4" stroke-width=".8" opacity="0.48"/><path d="M113.2 209.4l-6.2 1.5" stroke="#f8f6f4" stroke-width=".8" opacity="0.48"/><path d="M110.5 215.3l-8.2 5.0" stroke="#f8f6f4" stroke-width=".8" opacity="0.48"/><path d="M107.8 221.2l-8.5 4.4" stroke="#f8f6f4" stroke-width=".8" opacity="0.48"/><path d="M105.9 227.1l-8.6 7.3" stroke="#f8f6f4" stroke-width=".8" opacity="0.48"/><path d="M104.1 233.0l-5.2 3.7" stroke="#f8f6f4" stroke-width=".8" opacity="0.48"/><path d="M102.2 238.8l-5.7 3.4" stroke="#f8f6f4" stroke-width=".8" opacity="0.48"/><path d="M100.9 244.7l-5.3 4.3" stroke="#f8f6f4" stroke-width=".8" opacity="0.48"/><path d="M99.7 250.6l-8.1 6.4" stroke="#f8f6f4" stroke-width=".8" opacity="0.48"/><path d="M83.9 395.0L95.0 408.6L111.7 422.3L130.9 430.9L130.9 430.9" stroke="#e6e0dc" stroke-width="1.7" opacity="0.53" fill="none"/><path d="M83.9 395.0l1.0 6.3" stroke="#e6e0dc" stroke-width=".8" opacity="0.37"/><path d="M87.6 399.5l0.9 6.2" stroke="#e6e0dc" stroke-width=".8" opacity="0.37"/><path d="M91.3 404.1l0.5 6.2" stroke="#e6e0dc" stroke-width=".8" opacity="0.37"/><path d="M95.0 408.6l0.1 5.3" stroke="#e6e0dc" stroke-width=".8" opacity="0.37"/><path d="M100.6 413.2l1.5 5.2" stroke="#e6e0dc" stroke-width=".8" opacity="0.37"/><path d="M106.1 417.7l1.7 11.1" stroke="#e6e0dc" stroke-width=".8" opacity="0.37"/><path d="M111.7 422.3l3.2 7.0" stroke="#e6e0dc" stroke-width=".8" opacity="0.37"/><path d="M118.1 425.2l3.0 8.7" stroke="#e6e0dc" stroke-width=".8" opacity="0.37"/><path d="M124.5 428.0l3.6 9.4" stroke="#e6e0dc" stroke-width=".8" opacity="0.37"/><path d="M113.0 204.8L107.2 216.2L102.7 227.6L99.2 238.9L96.4 250.3" stroke="#ece4dc" stroke-width="1.6" opacity="0.56" fill="none"/><path d="M113.0 204.8l0.5 9.0" stroke="#ece4dc" stroke-width=".8" opacity="0.39"/><path d="M111.1 208.6l2.0 7.9" stroke="#ece4dc" stroke-width=".8" opacity="0.39"/><path d="M109.1 212.4l1.5 11.9" stroke="#ece4dc" stroke-width=".8" opacity="0.39"/><path d="M107.2 216.2l4.5 9.4" stroke="#ece4dc" stroke-width=".8" opacity="0.39"/><path d="M105.7 220.0l5.0 10.3" stroke="#ece4dc" stroke-width=".8" opacity="0.39"/><path d="M104.2 223.8l4.8 9.3" stroke="#ece4dc" stroke-width=".8" opacity="0.39"/><path d="M102.7 227.6l2.3 4.7" stroke="#ece4dc" stroke-width=".8" opacity="0.39"/><path d="M101.5 231.3l2.3 6.9" stroke="#ece4dc" stroke-width=".8" opacity="0.39"/><path d="M100.4 235.1l2.5 4.6" stroke="#ece4dc" stroke-width=".8" opacity="0.39"/><path d="M203.1 276.6L203.9 285.8L204.4 294.9L204.6 304.0L204.5 313.2" stroke="#e6e0dc" stroke-width="1.0" opacity="0.50" fill="none"/><path d="M203.1 276.6l4.3 5.2" stroke="#e6e0dc" stroke-width=".8" opacity="0.35"/><path d="M203.4 279.7l6.1 4.8" stroke="#e6e0dc" stroke-width=".8" opacity="0.35"/><path d="M203.6 282.7l4.6 3.7" stroke="#e6e0dc" stroke-width=".8" opacity="0.35"/><path d="M203.9 285.8l4.0 4.8" stroke="#e6e0dc" stroke-width=".8" opacity="0.35"/><path d="M204.0 288.8l5.2 6.8" stroke="#e6e0dc" stroke-width=".8" opacity="0.35"/><path d="M204.2 291.9l6.7 5.3" stroke="#e6e0dc" stroke-width=".8" opacity="0.35"/><path d="M204.4 294.9l5.6 4.7" stroke="#e6e0dc" stroke-width=".8" opacity="0.35"/><path d="M204.4 298.0l5.6 9.3" stroke="#e6e0dc" stroke-width=".8" opacity="0.35"/><path d="M204.5 301.0l4.2 5.7" stroke="#e6e0dc" stroke-width=".8" opacity="0.35"/></g>
        <rect x="21" y="177" width="256" height="256" fill="url(#bubShade)"/>
      </g>
      <circle cx="149" cy="305.5" r="126" fill="none" stroke="#eef0f5" stroke-width="4" opacity=".55" filter="url(#soft)"/><circle cx="149" cy="305.5" r="127.3" fill="none" stroke="#f4f5f8" stroke-width="1.5" opacity=".7"/>
      
      <rect y="345" width="302" height="190" fill="url(#snow)" mask="url(#msnow)"/>
      <rect y="375" width="302" height="100" fill="url(#crys)"/>
      <g mask="url(#m1)"><rect y="375" width="302" height="95" filter="url(#noise)"/></g>
      <g mask="url(#m1)"><rect y="375" width="302" height="95" filter="url(#noise3)" opacity=".8"/></g>
      <g mask="url(#m2)"><rect y="380" width="302" height="155" filter="url(#noise2)" opacity=".8"/></g>
      <g mask="url(#m3)"><rect y="450" width="302" height="85" filter="url(#blob)" opacity=".8"/></g>
      <g clip-path="url(#ppclip)">
        <rect x="94" y="233" width="114" height="114" fill="#3a3f4a"/>
        <g filter="url(#pps)">
        <path d="M150 240c30 0 52 18 58 40v20c-10-20-30-44-58-44z" fill="#4a505c"/>
        <path d="M92 318c0-34 18-62 52-66c30-4 50 14 56 40c6 22 6 38 2 54H96c-4-10-5-18-4-28z" fill="url(#hair)"/>
        <path d="M174 266c16 12 26 36 24 62l-4 18h-20c6-20 8-50 0-80z" fill="#f2e6cc" opacity=".8"/>
        <path d="M98 300c4-14 10-22 18-26c-4 12-6 24-4 34z" fill="#efe0c0" opacity=".6"/>
        <path d="M96 332c6-14 16-22 26-20l4 36H96z" fill="#3a332c" opacity=".75"/>
        <ellipse cx="146" cy="302" rx="21" ry="29" fill="#e4bca4"/>
        <path d="M124 294c0-22 10-38 24-38c14 0 24 10 25 24c-8-10-20-14-30-12c-10 2-16 12-19 26z" fill="#d8bc8a"/>
        <path d="M136 328c0 8 2 16 4 19h14c2-2 4-10 4-19z" fill="#d6ac92"/>
        </g>
        <ellipse cx="138" cy="291.5" rx="3.2" ry="2" fill="#2e221c"/><ellipse cx="155.5" cy="290.5" rx="3.2" ry="2" fill="#2e221c"/>
        <path d="M138 312q9 6 18 0q-9 8-18 0z" fill="#fff"/>
        <path d="M143 301q3 4 6 0" stroke="#b88a70" stroke-width="1" fill="none"/>
      </g>
      <text x="160.5" y="126.8" fill="#fbfbfd" font-family="Liberation Sans" font-size="23.5" text-anchor="middle" textLength="206" lengthAdjust="spacingAndGlyphs">Welcome back Adelle</text>
      <rect x="37.5" y="459" width="227" height="46" rx="7" fill="#fff"/>
      <text x="151" y="489.5" fill="#1c2840" stroke="#fff" stroke-width=".35" font-family="Liberation Sans" font-size="25" text-anchor="middle" textLength="85" lengthAdjust="spacingAndGlyphs">continue</text>
    </svg>
  </div>
</div>

<div id="dock" class="abs" style="left:43.5px;top:932.5px;width:1513px;height:80px;border-radius:5px;overflow:hidden;background:linear-gradient(90deg,#5a5356 0%,#5b5457 40%,#5d585c 55%,#64626c 64%,#6a6874 72%,#78686a 80%,#7a6c72 86%,#747486 93%,#78788c 100%);box-shadow:0 0 0 .5px rgba(0,0,0,.4)"><div class="abs" style="left:1090px;top:0;width:260px;height:80px;background:radial-gradient(ellipse 130px 70px at 130px 75px,rgba(190,110,70,.75),rgba(170,100,70,0))"></div></div>
<svg class="abs" style="left:0;top:0" width="1600" height="1000">
<defs>
<linearGradient id="finderB" x1="0" y1="0" x2="0" y2="1"><stop offset="0" stop-color="#2ab8fa"/><stop offset="1" stop-color="#1a6ef0"/></linearGradient>
<radialGradient id="siriG" cx=".5" cy=".9" r=".9"><stop offset="0" stop-color="#2a8ad8"/><stop offset=".45" stop-color="#1a3a78"/><stop offset=".8" stop-color="#180c30"/><stop offset="1" stop-color="#0c0818"/></radialGradient>
<linearGradient id="lpG" x1="0" y1="0" x2="0" y2="1"><stop offset="0" stop-color="#dcdcdc"/><stop offset="1" stop-color="#8a8a8e"/></linearGradient>
<linearGradient id="mailG" x1="0" y1="0" x2="0" y2="1"><stop offset="0" stop-color="#3a7ad8"/><stop offset="1" stop-color="#b8d8f4"/></linearGradient>
<linearGradient id="trashG" x1="0" y1="0" x2="0" y2="1"><stop offset="0" stop-color="#f0f0f2"/><stop offset="1" stop-color="#c8c8cc"/></linearGradient>
</defs><g transform="translate(54.5,944)"><rect x="0" y="0" width="41" height="39" rx="2.5" fill="#eef1f4"/><path d="M2.5 0h20c-3 6-5 13-5 21h5v18h-20a2.5 2.5 0 0 1-2.5-2.5V2.5a2.5 2.5 0 0 1 2.5-2.5z" fill="url(#finderB)"/><path d="M12 9v4M29 9v4" stroke="#111" stroke-width="1.4"/><path d="M8 26c6 5 18 5 25 0" stroke="#111" stroke-width="1.4" fill="none"/></g><g transform="translate(109.5,944)"><circle cx="20.5" cy="20.5" r="21.5" fill="#e8e8ee"/><circle cx="20.5" cy="20.5" r="19.8" fill="url(#siriG)"/><path d="M1.5 23c6-5 12-2 19 2s12 3 19-3" stroke="#e848b8" stroke-width="2.2" fill="none" opacity=".85"/><path d="M1.5 27c6-6 13-4 19 1s13 3 19-4" stroke="#38d8f0" stroke-width="3" fill="none" opacity=".8"/><path d="M3 31c6-4 11-2 17 1s12 2 17-2" stroke="#fff" stroke-width="3" fill="none" opacity=".85"/></g><g transform="translate(164.5,944)"><circle cx="20.5" cy="20.5" r="21.5" fill="#e4e4e6"/><circle cx="20.5" cy="20.5" r="20" fill="url(#lpG)"/><path d="M31 9c-8 1-13 6-16 12l-5.5 1 4 3-3.5 6 6-3 3 4 1-5.5c6-3 11-8 11-17.5z" fill="#3a3a3c"/><circle cx="25.5" cy="15.5" r="2" fill="#9a9a9e"/></g><g transform="translate(219.5,944)"><circle cx="20.5" cy="20.5" r="21.5" fill="#f2f2f2"/><circle cx="20.5" cy="20.5" r="19.5" fill="#1e7ff0"/><circle cx="20.5" cy="20.5" r="16" fill="none" stroke="#cfe4ff" stroke-width="2" stroke-dasharray="1 1.5"/><path d="M32 9L18 19l4 3z" fill="#f03c3c"/><path d="M9 32l9-13 4 3z" fill="#eee"/></g><g transform="translate(273.5,944)"><g transform="rotate(-8 20 20)"><rect x="2" y="0" width="34" height="42" fill="#fff"/><rect x="4.5" y="2.5" width="29" height="37" fill="url(#mailG)"/><path d="M9 10c4 1 8 6 11 11c4 3 9 6 12 9l-6-1c-4-3-9-6-11-10c-3-2-5-5-6-9z" fill="#9a7a58"/><circle cx="29" cy="33" r="6" fill="none" stroke="#666" stroke-width=".8"/></g></g><g transform="translate(328.5,944)"><rect x="2" y="0" width="34" height="42" rx="3" fill="#b08048" transform="rotate(-4 20 20)"/><rect x="36" y="6" width="3" height="30" fill="#6cc06a"/><circle cx="19" cy="20" r="10" fill="none" stroke="#8a6030" stroke-width="1.3"/><circle cx="19" cy="17" r="4" fill="#9a6a38"/><path d="M11 28c3-5 13-5 16 0" fill="#9a6a38"/></g><g transform="translate(382.5,944)"><g transform="rotate(-6 20 20)"><rect x="3" y="1" width="36" height="40" rx="2" fill="#566"/><rect x="2" y="0" width="35" height="38" fill="#fbfbfb"/><rect x="2" y="0" width="35" height="11" fill="#e84848"/><text x="19.5" y="9" font-size="8" fill="#fff" text-anchor="middle" font-family="Liberation Sans">FEB</text><text x="19.5" y="32" font-size="20" fill="#111" text-anchor="middle" font-family="Liberation Sans">7</text></g></g><g transform="translate(437.5,944)"><path d="M2 4h38l-3 14H5z" fill="#2a8ee8"/><rect x="9" y="6" width="22" height="10" fill="#f4f4f4"/><circle cx="15" cy="11" r="3" fill="#e8a030"/><rect x="19.5" y="18" width="2.5" height="19" fill="#c8c8cc"/><ellipse cx="20.8" cy="38" rx="9" ry="3" fill="#d8dadc"/></g><g transform="translate(492.5,944)"><g transform="rotate(-6 20 20)"><rect x="3" y="0" width="35" height="41" fill="#fdfdf6"/><rect x="3" y="0" width="35" height="6" fill="#f8d23a"/><path d="M5 12h31M5 17h31M5 22h31M5 27h31M5 32h31M5 37h31" stroke="#ddd" stroke-width="1"/></g></g><g transform="translate(547.5,944)"><g transform="rotate(-6 20 20)"><rect x="3" y="0" width="35" height="40" rx="3" fill="#fafafa"/><circle cx="10" cy="10" r="2.5" fill="#f48a28"/><circle cx="10" cy="17" r="2.5" fill="#2e9ef0"/><circle cx="10" cy="24" r="2.5" fill="#50c048"/><circle cx="10" cy="31" r="2.5" fill="#b060e0"/></g></g><g transform="translate(601.5,944)"><circle cx="20.5" cy="20.5" r="21" fill="#fafafa"/><ellipse cx="20.5" cy="11" rx="5.5" ry="9" fill="#f5a623" opacity=".85" transform="rotate(0 20.5 20.5)"/><ellipse cx="20.5" cy="11" rx="5.5" ry="9" fill="#f8d21c" opacity=".85" transform="rotate(45 20.5 20.5)"/><ellipse cx="20.5" cy="11" rx="5.5" ry="9" fill="#8ac840" opacity=".85" transform="rotate(90 20.5 20.5)"/><ellipse cx="20.5" cy="11" rx="5.5" ry="9" fill="#38b890" opacity=".85" transform="rotate(135 20.5 20.5)"/><ellipse cx="20.5" cy="11" rx="5.5" ry="9" fill="#3a8ee6" opacity=".85" transform="rotate(180 20.5 20.5)"/><ellipse cx="20.5" cy="11" rx="5.5" ry="9" fill="#7050d0" opacity=".85" transform="rotate(225 20.5 20.5)"/><ellipse cx="20.5" cy="11" rx="5.5" ry="9" fill="#c848a8" opacity=".85" transform="rotate(270 20.5 20.5)"/><ellipse cx="20.5" cy="11" rx="5.5" ry="9" fill="#f04848" opacity=".85" transform="rotate(315 20.5 20.5)"/></g><g transform="translate(656.5,944)"><circle cx="20.5" cy="20.5" r="21.5" fill="#e8f0f8"/><circle cx="20.5" cy="20.5" r="20" fill="#1e8ef4"/><path d="M13 31l9-20M28 31l-9-20M9 24h23" stroke="#fff" stroke-width="2.6" stroke-linecap="round"/></g><g transform="translate(711.5,944)"><rect x="0" y="0" width="41" height="41" rx="2" fill="#a8acb0"/><circle cx="20.5" cy="20.5" r="17" fill="#2c2c2e"/><circle cx="20.5" cy="20.5" r="15.5" fill="none" stroke="#8a8a8e" stroke-width="3" stroke-dasharray="2 1.6"/><circle cx="20.5" cy="20.5" r="11" fill="#8a8a8e"/><circle cx="20.5" cy="20.5" r="8.5" fill="#3a3a3c"/><path d="M20.5 20.5v-9M20.5 20.5l8 4.6M20.5 20.5l-8 4.6" stroke="#a0a0a4" stroke-width="3.2"/><circle cx="20.5" cy="20.5" r="3" fill="#b0b0b4"/></g><g transform="translate(765.5,944)"><rect x="0" y="33" width="41" height="6" rx="1.5" fill="#eaeaea"/><path d="M4 1h33l3 32H1z" fill="#4a4a4a"/><rect x="3" y="1" width="35" height="26" rx="2" fill="#6a6a6a"/><rect x="2" y="27" width="37" height="6" fill="#3c3c3c"/><text x="20.5" y="23" font-size="22" font-weight="bold" fill="#f7a42a" text-anchor="middle" font-family="Liberation Sans">S</text></g><g transform="translate(820.5,944)"><rect x="0" y="2" width="41" height="37" rx="3" fill="#c8c8c8"/><rect x="1.5" y="3.5" width="38" height="34" rx="2" fill="#111"/><path d="M6 10l4 2-4 2M11 16h6" stroke="#eee" stroke-width="1.4" fill="none"/></g><g transform="translate(875.5,944)"><path d="M1 6l7 31h6l6-19 6 19h6l8-31" stroke="#2a8ee0" stroke-width="5.5" fill="none" stroke-linejoin="round" stroke-linecap="round"/></g><g transform="translate(930.5,944)"><path d="M10 40V8h10a9.5 9.5 0 0 1 0 19h-5" stroke="#f05628" stroke-width="7" fill="none" stroke-linecap="round" stroke-linejoin="round"/></g><g transform="translate(984.5,944)"><path d="M4 4l12 17-12 18h8l8-12 8 12h8L24 21 36 4h-8l-8 11-8-11z" fill="#3cb43c"/></g><g transform="translate(1039.5,944)"><ellipse cx="18" cy="22" rx="13" ry="17" fill="none" stroke="#f6c21e" stroke-width="8"/><ellipse cx="16.5" cy="21" rx="9" ry="13" fill="none" stroke="#fde060" stroke-width="2" opacity=".6"/><circle cx="29.5" cy="6" r="7.5" fill="#e8352e"/><text x="29.5" y="9.5" font-size="9.5" fill="#fff" text-anchor="middle" font-family="Liberation Sans">52</text></g><g transform="translate(1094.5,944)"><circle cx="20.5" cy="20.5" r="21" fill="#e84a3a"/><path d="M20.5 20.5L2.3 31A21 21 0 0 1 2.3 10z" fill="#34a853"/><path d="M20.5 20.5L2.3 31A21 21 0 0 0 38.7 31z" fill="#30a050"/><path d="M20.5 20.5L38.7 10A21 21 0 0 1 20.5 41.5L20.5 20.5z" fill="#fcc818"/><path d="M20.5 20.5L2.3 31A21 21 0 0 0 20.5 41.5z" fill="#34a853"/><circle cx="20.5" cy="20.5" r="9" fill="#fff"/><circle cx="20.5" cy="20.5" r="7" fill="#3a7ef0"/></g><g transform="translate(1149.5,944)"><circle cx="20.5" cy="20.5" r="21" fill="#d8f0e0"/><circle cx="20.5" cy="20.5" r="19.5" fill="#40b880"/><g stroke="#e8fff0" stroke-width="1.3" fill="none"><ellipse cx="20.5" cy="20.5" rx="13" ry="5"/><ellipse cx="20.5" cy="20.5" rx="13" ry="5" transform="rotate(60 20.5 20.5)"/><ellipse cx="20.5" cy="20.5" rx="13" ry="5" transform="rotate(-60 20.5 20.5)"/></g><circle cx="20.5" cy="20.5" r="2" fill="#fff"/></g><g transform="translate(1204.5,944)"><circle cx="20.5" cy="20.5" r="21" fill="#f26430"/><path d="M6 40l5-6 14-14 3 3-14 14z" fill="#d8d8dc"/><path d="M25 20l5-5" stroke="#bcbcc0" stroke-width="5" stroke-linecap="round"/><circle cx="30" cy="12" r="5" fill="#e8e8ea"/><circle cx="31" cy="11.5" r="2.3" fill="#f26430"/></g><g transform="translate(1259.5,944)"><rect x="0" y="4" width="38" height="30" fill="#f4f4f4" transform="rotate(-4 20 20)"/><rect x="3" y="7" width="32" height="22" fill="#4a7ab8" transform="rotate(-4 20 20)"/><rect x="3" y="20" width="32" height="9" fill="#c8d0d8" transform="rotate(-4 20 20)"/><circle cx="30" cy="28" r="9" fill="#9a9a9a"/><circle cx="30" cy="28" r="6" fill="#d8dde0"/></g><g transform="translate(1314.5,944)"><rect x="0" y="0" width="41" height="41" fill="#111"/><circle cx="15" cy="12" r="7" fill="#f06a28"/><path d="M41 0v41H20z" fill="#9a5ae0"/><path d="M9 32l6-6" stroke="#eee" stroke-width="1.5"/></g><g transform="translate(1369.5,944)"><path d="M10 4h21l10 12-20 25L0 16z" fill="#f8a818"/><path d="M0 16h41L21 41z" fill="#f89818"/><path d="M10 4l11 12 10-12" fill="#fdd86a"/></g><g transform="translate(1423.5,944)"><rect x="0" y="8" width="32" height="32" rx="3" fill="#1a78f0" transform="rotate(-20 16 24)"/><rect x="7" y="1" width="33" height="36" rx="3" fill="#f8fbff" transform="rotate(-10 23 20)"/><path d="M16 12h14v5H21zM16 17h9l5 5h-9v6l-5-5z" fill="#1a8cf8"/></g><g transform="translate(1502.5,944)"><path d="M3 7h34l-4 33H7z" fill="#e4e4e8" opacity=".95"/><path d="M7 10l3 28M14 10l1 29M26 10l-1 29M33 10l-3 28" stroke="#fff" stroke-width="1" opacity=".6"/><ellipse cx="20" cy="7" rx="17" ry="3.5" fill="#f6f6f8"/><path d="M9 6l5-4 4 4 5-4 6 4" stroke="#555" stroke-width="1.6" fill="none"/><path d="M13 5l3-2M22 4l4 2" stroke="#3a8ad0" stroke-width="1.5"/></g><path d="M1485 941v50" stroke="#3e3a3e" stroke-width="1.2"/>
<circle cx="75" cy="995.5" r="2.1" fill="#111"/><circle cx="240" cy="995.5" r="2.1" fill="#111"/><circle cx="403" cy="995.5" r="2.1" fill="#111"/><circle cx="458" cy="995.5" r="2.1" fill="#111"/><circle cx="513" cy="995.5" r="2.1" fill="#111"/><circle cx="732" cy="995.5" r="2.1" fill="#111"/><circle cx="786" cy="995.5" r="2.1" fill="#111"/><circle cx="842" cy="995.5" r="2.1" fill="#111"/><circle cx="896" cy="995.5" r="2.1" fill="#111"/><circle cx="1005" cy="995.5" r="2.1" fill="#111"/><circle cx="1061" cy="995.5" r="2.1" fill="#111"/><circle cx="1115" cy="995.5" r="2.1" fill="#111"/><circle cx="1170" cy="995.5" r="2.1" fill="#111"/><circle cx="1225" cy="995.5" r="2.1" fill="#111"/><circle cx="1280" cy="995.5" r="2.1" fill="#111"/><circle cx="1335" cy="995.5" r="2.1" fill="#111"/><circle cx="1390" cy="995.5" r="2.1" fill="#111"/><circle cx="1444" cy="995.5" r="2.1" fill="#111"/>
</svg>

<div class="menu" style="left:11px;top:82px;width:227px;height:217px;background:linear-gradient(180deg,#cbcbcb 0,#bebebe 10%,#bbbbbb 60%,#bebebe 100%)">
<div class="row" style="top:4.5px;"><span class="mt" style="left:35px">Layer</span><svg class="mi" width="14" height="14"><rect x="1.1" y="1.1" width="11.6" height="11.1" rx="1.8" stroke="#333" stroke-width="1.25" fill="none"/></svg><span class="mt" style="right:10px;font-size:15.5px">&#8679;&#8984;N</span></div>
<div class="row" style="top:32.3px;"><span class="mt" style="left:35px">Layer Animation</span><svg class="mi" width="14" height="14"><rect x="1.1" y="1.1" width="11.6" height="11.1" rx="1.8" stroke="#333" stroke-width="1.25" fill="none"/><path d="M6.2 1.5v5.2H1.5" stroke="#333" stroke-width="1.1" fill="none"/><path d="M6.2 6.7v5.2M6.2 6.7h6" stroke="#333" stroke-width=".6" opacity=".35"/></svg><svg class="arr" style="right:13px" width="11" height="12"><path d="M1.2 0.4L10.8 6L1.2 11.6z" fill="#1a1a1a"/></svg></div>
<div class="row" style="top:60.1px;"><span class="mt" style="left:35px">Image</span><svg class="mi" width="14" height="14"><rect x="1.1" y="1.1" width="11.6" height="11.1" rx="1.8" stroke="#333" stroke-width="1.25" fill="none"/><path d="M2.6 2.6l8.6 8.1M11.2 2.6l-8.6 8.1" stroke="#333" stroke-width="1" fill="none"/></svg></div>
<div class="row" style="top:87.9px;"><span class="mt" style="left:35px">Background</span><svg class="mi" width="14" height="14"><rect x="1.1" y="1.1" width="11.6" height="11.1" rx="1.8" stroke="#333" stroke-width="1.25" fill="none"/><path d="M5 4.3h4.3v4.3M9.3 4.3L4.6 9M4.6 6v3h3" stroke="#333" stroke-width="1" fill="none"/></svg></div>
<div class="sep" style="top:121.9px"></div>
<div class="row" style="top:129.0px;"><span class="mt" style="left:35px">State</span><svg class="mi" width="14" height="14"><rect x="1.1" y="1.1" width="11.6" height="11.1" rx="1.8" stroke="#333" stroke-width="1.25" fill="none"/><path d="M6.9 1.5v10.4M1.5 6.65h10.8" stroke="#333" stroke-width="1.1" fill="none"/></svg><svg class="arr" style="right:13px" width="11" height="12"><path d="M1.2 0.4L10.8 6L1.2 11.6z" fill="#1a1a1a"/></svg></div>
<div class="row" style="top:156.8px;color:#7b7b7b;"><span class="mt" style="left:35px">State Animation</span><svg class="mi" width="14" height="14"><rect x="1.1" y="1.1" width="11.6" height="11.1" rx="1.8" stroke="#8a8a8a" stroke-width="1.25" fill="none"/><path d="M3.3 6.65h6.2M7 4.2l2.5 2.45L7 9.1" stroke="#8a8a8a" stroke-width="1" fill="none"/></svg></div>
<div class="row" style="top:184.6px;background:#0a60d3;color:#fff;"><span class="mt" style="left:35px">Event</span><svg class="mi" width="14" height="14"><rect x="1.1" y="1.1" width="11.6" height="11.1" rx="1.8" stroke="#fff" stroke-width="1.25" fill="none"/><rect x="4.3" y="4.2" width="5.2" height="5" stroke="#fff" stroke-width="1.2" fill="none"/></svg><svg class="arr" style="right:13px" width="11" height="12"><path d="M1.2 0.4L10.8 6L1.2 11.6z" fill="#fff"/></svg></div>
</div>
<div class="menu" style="left:238px;top:262.2px;width:312px;height:119.7px;background:linear-gradient(90deg,#b8b8b8,#bcbcbc 80%,#c2c2c2)">
<div class="row" style="top:4.5px;"><span class="mt" style="left:23.4px">WelcomeMessage <span class="gr">from Way One</span></span><svg class="arr" style="right:12.4px" width="11" height="12"><path d="M1.2 0.4L10.8 6L1.2 11.6z" fill="#1a1a1a"/></svg></div>
<div class="row" style="top:32.3px;background:#0a60d3;color:#fff;"><span class="mt" style="left:23.4px">ContinueButton <span style="color:#fff">from Way One</span></span><svg class="arr" style="right:12.4px" width="11" height="12"><path d="M1.2 0.4L10.8 6L1.2 11.6z" fill="#fff"/></svg></div>
<div class="row" style="top:60.1px;"><span class="mt" style="left:23.4px">ProfilePicture <span class="gr">from Way One</span></span><svg class="arr" style="right:12.4px" width="11" height="12"><path d="M1.2 0.4L10.8 6L1.2 11.6z" fill="#1a1a1a"/></svg></div>
<div class="row" style="top:87.9px;"><span class="mt" style="left:23.4px">UI <span class="gr">from Way One</span></span><svg class="arr" style="right:12.4px" width="11" height="12"><path d="M1.2 0.4L10.8 6L1.2 11.6z" fill="#1a1a1a"/></svg></div>
</div>
<div class="menu" style="left:550px;top:290px;width:161px;height:479px;background:linear-gradient(90deg,#bababa 0%,#c0c0c0 55%,#d1d1d1 80%,#d9d9d9 100%)">
<div class="row" style="top:4.4px;background:linear-gradient(90deg,#0a60d3,#1a6ee0);color:#fff;"><span class="mt" style="left:23.9px">Click</span><svg class="arr" style="right:12.8px" width="11" height="12"><path d="M1.2 0.4L10.8 6L1.2 11.6z" fill="#fff"/></svg></div>
<div class="row" style="top:32.2px;"><span class="mt" style="left:23.9px">Touch</span><svg class="arr" style="right:12.8px" width="11" height="12"><path d="M1.2 0.4L10.8 6L1.2 11.6z" fill="#1a1a1a"/></svg></div>
<div class="row" style="top:60.0px;"><span class="mt" style="left:23.9px">Mouse</span><svg class="arr" style="right:12.8px" width="11" height="12"><path d="M1.2 0.4L10.8 6L1.2 11.6z" fill="#1a1a1a"/></svg></div>
<div class="sep" style="top:94.0px"></div>
<div class="row" style="top:101.1px;"><span class="mt" style="left:23.9px">Drag</span><svg class="arr" style="right:12.8px" width="11" height="12"><path d="M1.2 0.4L10.8 6L1.2 11.6z" fill="#1a1a1a"/></svg></div>
<div class="row" style="top:128.9px;"><span class="mt" style="left:23.9px">Pinch</span><svg class="arr" style="right:12.8px" width="11" height="12"><path d="M1.2 0.4L10.8 6L1.2 11.6z" fill="#1a1a1a"/></svg></div>
<div class="row" style="top:156.7px;"><span class="mt" style="left:23.9px">Scale</span><svg class="arr" style="right:12.8px" width="11" height="12"><path d="M1.2 0.4L10.8 6L1.2 11.6z" fill="#1a1a1a"/></svg></div>
<div class="row" style="top:184.5px;"><span class="mt" style="left:23.9px">Rotate</span><svg class="arr" style="right:12.8px" width="11" height="12"><path d="M1.2 0.4L10.8 6L1.2 11.6z" fill="#1a1a1a"/></svg></div>
<div class="sep" style="top:218.5px"></div>
<div class="row" style="top:225.6px;"><span class="mt" style="left:23.9px">Animation</span><svg class="arr" style="right:12.8px" width="11" height="12"><path d="M1.2 0.4L10.8 6L1.2 11.6z" fill="#1a1a1a"/></svg></div>
<div class="row" style="top:253.4px;"><span class="mt" style="left:23.9px">States</span><svg class="arr" style="right:12.8px" width="11" height="12"><path d="M1.2 0.4L10.8 6L1.2 11.6z" fill="#1a1a1a"/></svg></div>
<div class="sep" style="top:287.4px"></div>
<div class="row" style="top:294.5px;"><span class="mt" style="left:23.9px">Tap</span><svg class="arr" style="right:12.8px" width="11" height="12"><path d="M1.2 0.4L10.8 6L1.2 11.6z" fill="#1a1a1a"/></svg></div>
<div class="row" style="top:322.3px;"><span class="mt" style="left:23.9px">ForceTap</span><svg class="arr" style="right:12.8px" width="11" height="12"><path d="M1.2 0.4L10.8 6L1.2 11.6z" fill="#1a1a1a"/></svg></div>
<div class="row" style="top:350.1px;"><span class="mt" style="left:23.9px">LongPress</span><svg class="arr" style="right:12.8px" width="11" height="12"><path d="M1.2 0.4L10.8 6L1.2 11.6z" fill="#1a1a1a"/></svg></div>
<div class="row" style="top:377.9px;"><span class="mt" style="left:23.9px">Pan</span><svg class="arr" style="right:12.8px" width="11" height="12"><path d="M1.2 0.4L10.8 6L1.2 11.6z" fill="#1a1a1a"/></svg></div>
<div class="row" style="top:405.7px;"><span class="mt" style="left:23.9px">Swipe</span><svg class="arr" style="right:12.8px" width="11" height="12"><path d="M1.2 0.4L10.8 6L1.2 11.6z" fill="#1a1a1a"/></svg></div>
<div class="sep" style="top:439.7px"></div>
<div class="row" style="top:446.8px;"><span class="mt" style="left:23.9px">Images</span><svg class="arr" style="right:12.8px" width="11" height="12"><path d="M1.2 0.4L10.8 6L1.2 11.6z" fill="#1a1a1a"/></svg></div>
</div>
<div class="menu" style="left:711px;top:290px;width:128px;height:64.4px;background:#ededed">
<div class="row" style="top:4.4px;background:#4a93ec;color:#fff;"><span class="mt" style="left:23.7px">Click</span></div>
<div class="row" style="top:32.2px;"><span class="mt" style="left:23.7px">DoubleClick</span></div>
</div>
</body></html>
